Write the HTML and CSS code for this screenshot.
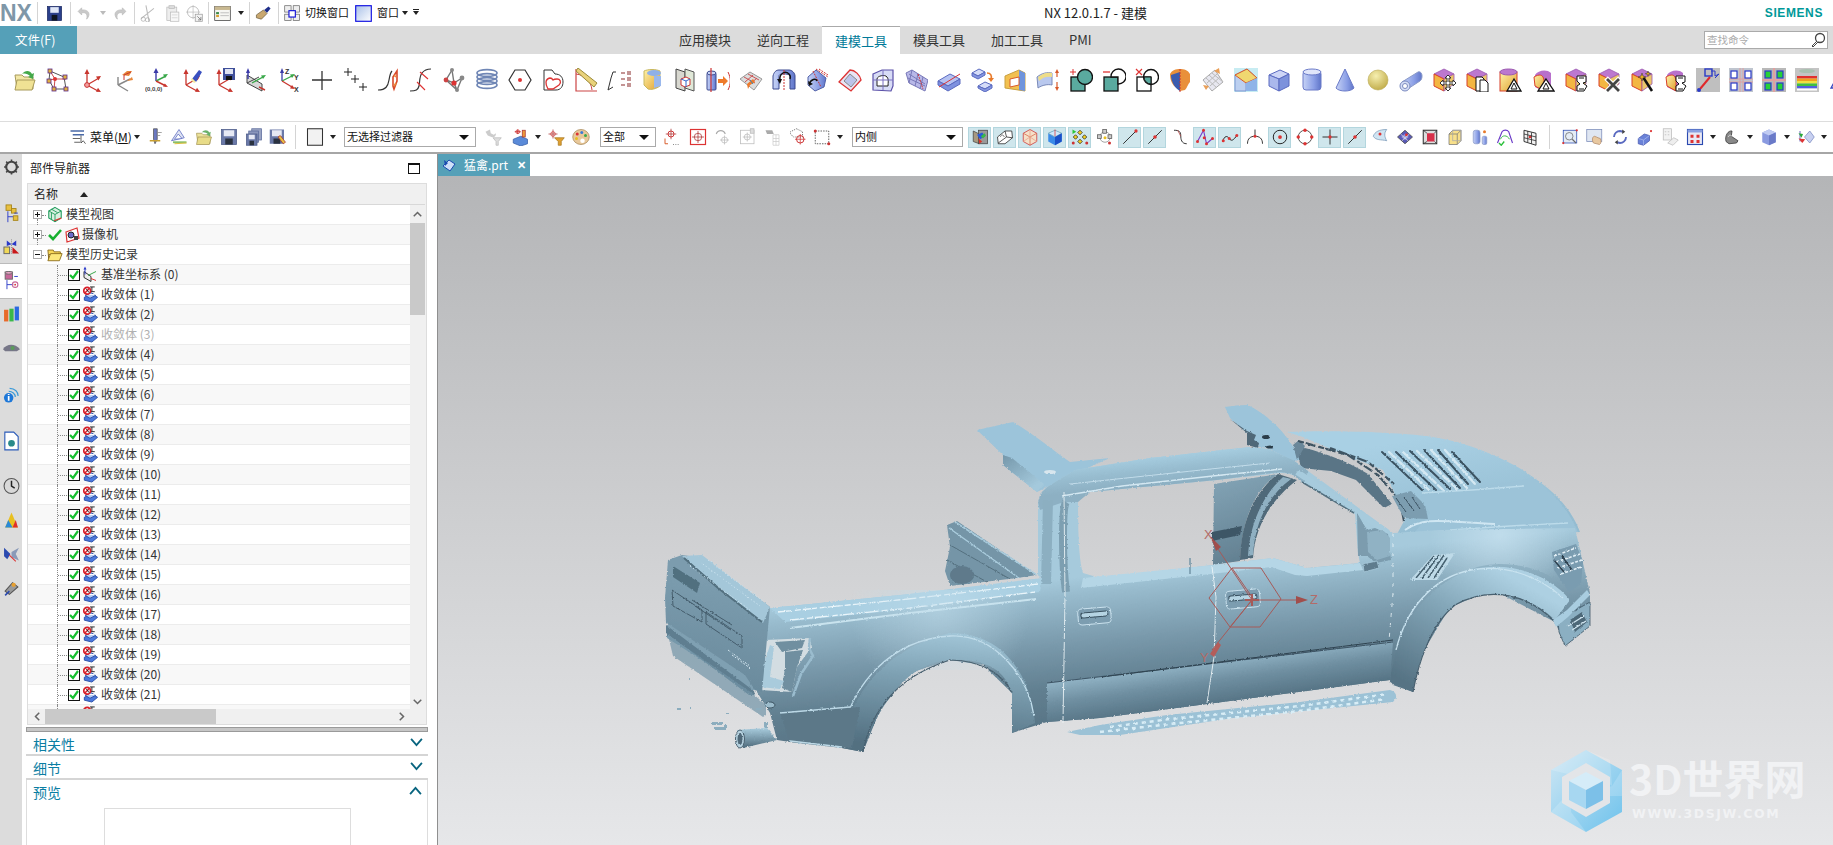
FILE: index.html
```html
<!DOCTYPE html>
<html lang="zh-CN">
<head>
<meta charset="utf-8">
<title>NX 12.0.1.7 - 建模</title>
<link rel="stylesheet" href="styles.css">
</head>
<body>
<svg class="defs" width="0" height="0" aria-hidden="true">
<defs>
<linearGradient id="gy" x1="0" y1="0" x2="1" y2="1"><stop offset="0" stop-color="#fff3a8"/><stop offset="1" stop-color="#e0a030"/></linearGradient>
<linearGradient id="gb" x1="0" y1="0" x2="1" y2="0"><stop offset="0" stop-color="#c6d2f5"/><stop offset=".6" stop-color="#8b9fe6"/><stop offset="1" stop-color="#5f75c8"/></linearGradient>
<linearGradient id="gs" x1="0" y1="0" x2="1" y2="1"><stop offset="0" stop-color="#d5d8f8"/><stop offset="1" stop-color="#7f8fdc"/></linearGradient>
<radialGradient id="gball" cx=".4" cy=".3" r=".8"><stop offset="0" stop-color="#f6efb0"/><stop offset="1" stop-color="#bca640"/></radialGradient>
<linearGradient id="qw" x1="0" y1="0" x2="1" y2="1"><stop offset="0" stop-color="#a8c0e8"/><stop offset="1" stop-color="#fff"/></linearGradient>

<symbol id="r1" viewBox="0 0 24 24"><path d="M2 7h7l2 2h9v12H4z" fill="#f2e7a6" stroke="#a89a5a"/><path d="M2 22l2-10h18l-3 10z" fill="#f0e294" stroke="#a89a5a"/><path d="M9 6c3-4 8-4 10 0l2-1-1 6-5-2 2-1c-2-2-5-3-8-2z" fill="#45a84a"/></symbol>
<symbol id="r2" viewBox="0 0 24 24"><path d="M4 3l14 6 2 12H8L3 12z" fill="none" stroke="#555"/><path d="M4 3l5 8 11 0M9 11l-1 10M3 12l6-1" fill="none" stroke="#c94a4a"/><g fill="#e0b040" stroke="#5a2a8a" stroke-width=".8"><rect x="2" y="1" width="4" height="4"/><rect x="17" y="7" width="4" height="4"/><rect x="1" y="11" width="4" height="4"/><rect x="6" y="19" width="4" height="4"/><rect x="18" y="19" width="4" height="4"/></g><circle cx="9" cy="11" r="2" fill="#d33"/></symbol>
<g id="ax"><path d="M8 17V5M8 17l12-7M8 17l11 6" fill="none" stroke="#c8362e" stroke-width="1.3"/><path d="M8 1l-2.5 5h5zM22 8l-5 .5 2.5 4zM22 24l-5-.2 2-4z" fill="#c8362e"/></g>
<symbol id="r3" viewBox="0 0 24 24"><use href="#ax"/><circle cx="8" cy="17" r="2.4" fill="#f2a0a0" stroke="#c33"/></symbol>
<symbol id="r4" viewBox="0 0 24 24"><path d="M6 17V9M6 17l12-6M6 17l10 6" fill="none" stroke="#888" stroke-width="1.4"/><path d="M10 7l5-4h5l-3 5zM15 13l5-4 1 3z" fill="#e8873a"/><path d="M12 12V7l7-3" fill="none" stroke="#c8362e"/></symbol>
<symbol id="r5" viewBox="0 0 24 24"><path d="M11 13V4" stroke="#3a3aa8" stroke-width="1.4"/><path d="M11 0l-2.5 5h5z" fill="#3a3aa8"/><path d="M11 13l10-5" stroke="#3aa84a" stroke-width="1.4"/><path d="M23 6l-5 .5 2 3.5z" fill="#3aa84a"/><path d="M11 13l10 5" stroke="#c8362e" stroke-width="1.4"/><path d="M23 19l-5-.4 1.8-3z" fill="#c8362e"/><text x="0" y="23" font-size="6" font-weight="700" fill="#444" font-family="Liberation Sans">(0,0,0)</text></symbol>
<symbol id="r6" viewBox="0 0 24 24"><use href="#ax"/><path d="M14 11l7-9 3 2-6 10z" fill="#3a50c0"/><path d="M14 10l4 4-2 1-3-3z" fill="#f4e9a0"/></symbol>
<symbol id="r7" viewBox="0 0 24 24"><use href="#ax"/><rect x="12" y="0" width="12" height="12" fill="#3f4f9a"/><rect x="14" y="1" width="8" height="5" fill="#dfe3f2"/><rect x="15" y="8" width="6" height="4" fill="#111"/></symbol>
<symbol id="r8" viewBox="0 0 24 24"><path d="M3 7l15 9v7L3 15z" fill="#d8d8d8" stroke="#444"/><path d="M3 15l12-6" stroke="#444"/><path d="M4 11V3" stroke="#3a3aa8" stroke-width="1.4"/><path d="M4 0L2 5h4z" fill="#3a3aa8"/><path d="M8 15l11-6" stroke="#3aa84a" stroke-width="1.4"/><path d="M22 7l-5 .5 2 3.5z" fill="#3aa84a"/><path d="M15 19l6 3" stroke="#c8362e" stroke-width="1.4"/></symbol>
<symbol id="r9" viewBox="0 0 24 24"><path d="M5 13V4" stroke="#3a3aa8" stroke-width="1.3"/><path d="M5 0L3 5h4z" fill="#3a3aa8"/><path d="M5 13l10-5" stroke="#3aa84a" stroke-width="1.3"/><path d="M18 6l-5 .5 2 3.5z" fill="#3aa84a"/><path d="M5 13l10 6" stroke="#c8362e" stroke-width="1.3"/><path d="M18 21l-5-.5 2-3.5z" fill="#c8362e"/><g font-size="7" font-weight="700" fill="#333" font-family="Liberation Sans"><text x="8" y="6">Z</text><text x="17" y="12">Y</text><text x="17" y="24">X</text></g></symbol>
<symbol id="r10" viewBox="0 0 24 24"><path d="M12 3v19M2 12h20" stroke="#333" stroke-width="1.3"/></symbol>
<symbol id="r11" viewBox="0 0 24 24"><path d="M5 0v8M1 4h8M12 7v8M8 11h8M20 15v8M16 19h8" stroke="#222"/></symbol>
<symbol id="r12" viewBox="0 0 24 24"><path d="M2 22c8 0 10-4 11-10s2-8 3-9" fill="none" stroke="#333" stroke-width="1.2"/><path d="M17 9l4-6v10l-3 8-1-3z" fill="none" stroke="#d94a2a" stroke-width="1.6"/><path d="M18 7l2 2M18 18l2-3" stroke="#e88a3a" stroke-width="1.6"/></symbol>
<symbol id="r13" viewBox="0 0 24 24"><path d="M1 23c6 0 8-1 9-5s0-9 3-13 6-4 9-4" fill="none" stroke="#333" stroke-width="1.2"/><path d="M8 14l8 8M11 4l8 7" stroke="#d33" stroke-width="1.1"/></symbol>
<symbol id="r14" viewBox="0 0 24 24"><path d="M10 2L4 12l8 3 8-5M10 2l2 13 3 7M4 12l11 10 5-12" fill="none" stroke="#777" stroke-width="1.4"/><circle cx="10" cy="2" r="2" fill="#888"/><circle cx="4" cy="12" r="2.4" fill="#c44"/><circle cx="20" cy="10" r="2.4" fill="#888"/><circle cx="12" cy="15" r="2.6" fill="#d33"/><circle cx="15" cy="22" r="2" fill="#888"/></symbol>
<symbol id="r15" viewBox="0 0 24 24"><g fill="none" stroke="#6f86b5" stroke-width="1.6"><ellipse cx="12" cy="5" rx="10" ry="3.4"/><ellipse cx="12" cy="9" rx="10" ry="3.4"/><ellipse cx="12" cy="13" rx="10" ry="3.4"/><ellipse cx="12" cy="17" rx="10" ry="3.4"/></g></symbol>
<symbol id="r16" viewBox="0 0 24 24"><path d="M7 2h10l6 10-6 10H7L1 12z" fill="#fff" stroke="#333" stroke-width="1.2"/><circle cx="12" cy="12" r="2" fill="#d33"/></symbol>
<symbol id="r17" viewBox="0 0 24 24"><path d="M3 2h8l3 4c5 0 8 3 8 8 0 4-2 8-7 8H3z" fill="#fff" stroke="#333"/><path d="M7 21c-3-5-3-10 2-11 2 0 3 2 3 2s1-1 4-1 5 3 2 6l-6 4z" fill="none" stroke="#d33" stroke-width="1.3"/></symbol>
<symbol id="r18" viewBox="0 0 24 24"><path d="M2 1v22h21" fill="none" stroke="#c44" stroke-width="1.2"/><path d="M2 6c9 1 15 7 16 16" fill="none" stroke="#c44"/><path d="M4 0l19 15-3 4L2 3z" fill="#e9d27a" stroke="#9a8a3a"/></symbol>
<symbol id="r19" viewBox="0 0 24 24"><path d="M1 22l3-12M1 22l5-3" fill="none" stroke="#333"/><path d="M4 10l2-6h3" fill="none" stroke="#333"/><g fill="none" stroke="#8a2a2a" stroke-width="1.1"><path d="M14 5h4M20 4h4M20 6h4M14 11h4M20 10h4M20 12h4M14 17h4M20 16h4M20 18h4"/></g></symbol>
<symbol id="r20" viewBox="0 0 24 24"><path d="M4 3c4-2 12-2 16 0v15c-4 3-9 4-12 3l-4-4z" fill="url(#gy)" stroke="#c8b860"/><ellipse cx="14" cy="5" rx="7" ry="3" fill="#8fb0e8"/><path d="M14 8h7v10l-7 2z" fill="#9ab8ec"/></symbol>
<symbol id="r21" viewBox="0 0 24 24"><path d="M3 1l9 3v19l-9-3z" fill="#d8d8d0" stroke="#444"/><path d="M12 1l9 3v19l-9-3z" fill="#e0e8d8" stroke="#555"/><path d="M8 11l5-2 4 2v6l-5 2-4-2z" fill="#fff" stroke="#c33"/><path d="M8 11l5 2 4-2M13 13v6" stroke="#36c" fill="none"/></symbol>
<symbol id="r22" viewBox="0 0 24 24"><rect x="1" y="5" width="9" height="17" rx="1" fill="url(#gb)" stroke="#3c4a90"/><ellipse cx="5.500" cy="5" rx="4.500" ry="2" fill="#c6d2f5" stroke="#3c4a90"/><path d="M5 0v24" stroke="#c33" stroke-width="1.2"/><path d="M12 11h5V8l5 5-5 5v-3h-5z" fill="#ee7a2a"/><path d="M22 4c3 6 3 12 0 18" fill="none" stroke="#c33"/></symbol>
<symbol id="r23" viewBox="0 0 24 24"><path d="M1 11l10-7 12 7-8 11z" fill="#ddd" stroke="#999"/><path d="M5 9l11 6M9 6l11 6M6 14l8-7M10 17l8-7" stroke="#c55" fill="none"/><path d="M8 16l6-5 2 3-5 3-2 4z" fill="#ee7a2a"/><path d="M11 12l3 4" stroke="#38b"/></symbol>
<symbol id="r24" viewBox="0 0 24 24"><path d="M1 21V8c1-4 3-6 6-6h10c3 0 6 3 6 6v13h-5V9c0-2-1-3-6-3S7 7 7 9v12z" fill="url(#gb)" stroke="#3c4a90"/><path d="M8 12c-1-6 5-10 9-6 2 2 1 5 1 5" fill="none" stroke="#111" stroke-width="1.5"/><path d="M5 11l5 0-2 5z" fill="#111"/><path d="M12 2v21" stroke="#c33" stroke-dasharray="2 1"/></symbol>
<symbol id="r25" viewBox="0 0 24 24"><path d="M3 9l8-7 10 8-2 9-9 4-7-6z" fill="url(#gb)" stroke="#5060a8"/><path d="M11 1l12 8M14 1l9 6M8 3l8 16" stroke="#c33" fill="none" stroke-dasharray="2 1"/><path d="M4 16c2-5 7-6 8-3" stroke="#111" stroke-width="1.5" fill="none"/><path d="M3 13l1 5 4-2z" fill="#111"/></symbol>
<symbol id="r26" viewBox="0 0 24 24"><path d="M1 14L12 2c5 0 10 5 11 10L13 23z" fill="#e8e4f4" stroke="#d33" stroke-width="1.3"/><path d="M6 13l6-7 7 6-6 7z" fill="#bcc4ea" stroke="#888"/></symbol>
<symbol id="r27" viewBox="0 0 24 24"><path d="M2 6l9-4h11v16l-2 5-18-1z" fill="#d8dcf6" stroke="#5a50a8" stroke-width="1.2"/><path d="M6 18v-7c0-3 8-5 10-2 2 2 1 6 1 9z" fill="#fff" stroke="#222"/><path d="M12 2v20M2 12h20" stroke="#7a70c0" fill="none"/></symbol>
<symbol id="r28" viewBox="0 0 24 24"><path d="M2 5l6-3 16 10-3 11-16-8z" fill="#b8b8e8" stroke="#7878b8"/><path d="M4 10l17 8M5 6l16 10M8 2l-3 13M14 6l-3 12M19 9l-3 12" stroke="#7878b8" fill="none"/><path d="M14 6l5 15" stroke="#c33" stroke-dasharray="2 1"/></symbol>
<symbol id="r29" viewBox="0 0 24 24"><path d="M1 13l12-7 10 5-12 7z" fill="#b5c2f2" stroke="#5a6ac0"/><path d="M1 13v4l10 6 12-7v-5l-12 7z" fill="#7e91df" stroke="#5a6ac0"/><path d="M2 19L23 6" stroke="#d33"/></symbol>
<symbol id="r30" viewBox="0 0 24 24"><path d="M2 5l7-4 6 3-7 4z" fill="#d5dcf8" stroke="#5a6ac0"/><path d="M2 5v3l6 3 7-4V4l-7 4z" fill="#8596e0" stroke="#5a6ac0"/><path d="M8 18l7-4 7 3-7 4z" fill="#d5dcf8" stroke="#5a6ac0"/><path d="M8 18v2l7 4 7-4v-3l-7 4z" fill="#8596e0" stroke="#5a6ac0"/><path d="M17 5c4 0 5 3 4 6" stroke="#e87a2a" fill="none" stroke-width="1.6"/><path d="M18 10h6l-3 4z" fill="#e87a2a"/></symbol>
<symbol id="r31" viewBox="0 0 24 24"><path d="M2 8l14-6 6 3v18l-20-3z" fill="#f2c050" stroke="#c8a040"/><path d="M16 2l6 3v18l-6-1z" fill="#6f94dc"/><path d="M7 11l9-2v8l-9 2z" fill="#fff" stroke="#d85a2a"/></symbol>
<symbol id="r32" viewBox="0 0 24 24"><path d="M1 9c5-4 10-5 15-4v12c-4-1-10 0-14 3z" fill="#b9c8ee" stroke="#7a8ab8"/><path d="M2 9c5-4 9-5 14-4v4c-5-1-9 0-13 4z" fill="#eedd88"/><path d="M21 4v5M21 14v6" stroke="#d85a2a" stroke-width="1.2"/><path d="M21 1l-2 4h4zM21 23l-2-4h4z" fill="#d85a2a"/></symbol>
<symbol id="r33" viewBox="0 0 24 24"><rect x="2" y="9" width="14" height="14" fill="#5aaa9f" stroke="#111" stroke-width="1.3"/><circle cx="16" cy="9" r="7.500" fill="#5aaa9f" stroke="#111" stroke-width="1.300"/><path d="M4 1v6M1 4h6" stroke="#d33"/></symbol>
<symbol id="r34" viewBox="0 0 24 24"><rect x="2" y="9" width="14" height="14" fill="#5aaa9f" stroke="#111" stroke-width="1.3"/><path d="M16 16A7.500 7.500 0 1 0 9 9h7z" fill="#fff" stroke="#111" stroke-width="1.3"/><path d="M1 4h7" stroke="#d33" stroke-width="1.3"/></symbol>
<symbol id="r35" viewBox="0 0 24 24"><rect x="2" y="9" width="14" height="14" fill="#fff" stroke="#111" stroke-width="1.3"/><circle cx="16" cy="9" r="7.500" fill="none" stroke="#111" stroke-width="1.300"/><path d="M9 9h7v7a7 7 0 0 1-7-7z" fill="#5aaa9f" stroke="#111"/><path d="M1 1l6 6M7 1L1 7" stroke="#d33" stroke-width="1.200"/></symbol>
<symbol id="r36" viewBox="0 0 24 24"><path d="M2 6c2-4 6-5 10-5s8 1 10 5v8c-2 2-3 6-5 8l-5 1-2-3-4-2c-2-3-4-6-4-12z" fill="#e9903a"/><path d="M3 7l9-3v19c-4-2-9-8-9-16z" fill="#3a5cb0"/><path d="M12 1v23" stroke="#c33" stroke-dasharray="2 1"/></symbol>
<symbol id="r37" viewBox="0 0 24 24"><path d="M2 12L14 2l8 12-11 9z" fill="#e7e7f0" stroke="#aaa"/><path d="M5 10l11 10M8 7l11 10M11 5l11 9M6 15l10-9M9 18l10-9" stroke="#bbb" fill="none"/><path d="M13 3l5-3 1 6zM5 22l-3-5 6 1z" fill="#e9a05a"/></symbol>
<symbol id="r38" viewBox="0 0 24 24"><rect width="24" height="24" fill="#c7ecf2"/><path d="M1 7l12-6 10 9-11 13H1z" fill="#bcd0f0" stroke="#7f96d0"/><path d="M1 7l12-6 10 9-11 5z" fill="#f0d770" stroke="#d85a2a"/><path d="M12 15v8" stroke="#7f96d0"/><path d="M12 15l11-5v13H12z" fill="#8fb4e8"/></symbol>
<symbol id="r39" viewBox="0 0 24 24"><path d="M2 7l11-5 9 4-10 5z" fill="#cdd5f6" stroke="#5a6ac0"/><path d="M2 7l10 4v12L2 18z" fill="#aab8ec" stroke="#5a6ac0"/><path d="M12 11l10-5v12l-10 5z" fill="#7d92dc" stroke="#5a6ac0"/></symbol>
<symbol id="r40" viewBox="0 0 24 24"><rect x="3" y="3" width="18" height="19" rx="3" fill="url(#gb)" stroke="#6a7ac8"/><ellipse cx="12" cy="4" rx="9" ry="3" fill="#dfe5fa" stroke="#6a7ac8"/></symbol>
<symbol id="r41" viewBox="0 0 24 24"><path d="M12 1L3 20c3 4 15 4 18 0z" fill="url(#gb)" stroke="#6a7ac8"/></symbol>
<symbol id="r42" viewBox="0 0 24 24"><circle cx="12" cy="12" r="10" fill="url(#gball)" stroke="#b8a850" stroke-width=".6"/></symbol>
<symbol id="r43" viewBox="0 0 24 24"><path d="M3 14L19 4c2-1 4 1 4 4s-1 4-2 5L7 22z" fill="url(#gb)" stroke="#8a9ac8"/><ellipse cx="6" cy="18" rx="5" ry="5" fill="#d5ddf5" stroke="#7a8ac0"/><ellipse cx="6" cy="18" rx="2.500" ry="2.500" fill="#fff" stroke="#7a8ac0"/></symbol>
<g id="sy"><path d="M12 1l10 5-10 5-10-5z" fill="#bc78cf" stroke="#9a58b0" stroke-width=".8"/><path d="M2 6l10 5v12L2 18z" fill="#f3b642" stroke="#d8402a"/><path d="M12 11l10-5v10l-10 7z" fill="#ecc66a" stroke="#9a58b0" stroke-width=".8"/></g>
<g id="syr"><path d="M4 7c3-5 12-6 16-2v14l-8 4-8-4z" fill="#b870cc"/><path d="M3 9c5-3 9-3 10 3v11l-9-5z" fill="url(#gy)" stroke="#d8402a"/></g>
<symbol id="r44" viewBox="0 0 24 24"><use href="#sy"/><path d="M16 7l-3 3h2v4h-4v-2l-3 3 3 3v-2h4v4h-2l3 3 3-3h-2v-4h4v2l3-3-3-3v2h-4v-4h2z" fill="#fff" stroke="#333"/></symbol>
<symbol id="r45" viewBox="0 0 24 24"><use href="#sy"/><path d="M11 9h6l2 2v12h-8z" fill="#fff" stroke="#111"/><path d="M15 12h5l3 3v9h-8z" fill="#fff" stroke="#111"/></symbol>
<symbol id="r46" viewBox="0 0 24 24"><rect x="2" y="4" width="17" height="19" fill="url(#gy)" stroke="#d8402a"/><ellipse cx="10.500" cy="4" rx="8.500" ry="3" fill="#bc78cf" stroke="#9a58b0"/><path d="M16 11l7 12H9z" fill="#fff" stroke="#111" stroke-width="1.300"/><path d="M16 15l3 6h-6z" fill="none" stroke="#111"/></symbol>
<symbol id="r47" viewBox="0 0 24 24"><use href="#syr"/><path d="M15 11l8 12H7z" fill="#fff" stroke="#111" stroke-width="1.300"/><path d="M15 15l3 6h-6z" fill="none" stroke="#111"/></symbol>
<symbol id="r48" viewBox="0 0 24 24"><use href="#sy"/><path d="M13 8h9v6l-3 1 4 3-3 5h-7v-5l3-2-3-3z" fill="#fff" stroke="#111"/><path d="M15 10h5M15 21h5" stroke="#111"/></symbol>
<symbol id="r49" viewBox="0 0 24 24"><use href="#sy"/><path d="M9 10l14 14M23 10L9 24" stroke="#fff" stroke-width="5"/><path d="M10 11l12 12M22 11L10 23" stroke="#444" stroke-width="2.800"/></symbol>
<symbol id="r50" viewBox="0 0 24 24"><use href="#sy"/><path d="M13 9l9 14" stroke="#111" stroke-width="2.500"/><path d="M12 5l1 3 3 1-3 1-1 3-1-3-3-1 3-1zM18 3l.7 2 2 .7-2 .7-.7 2-.7-2-2-.7 2-.7z" fill="#e8b020" stroke="#333" stroke-width=".5"/></symbol>
<symbol id="r51" viewBox="0 0 24 24"><use href="#syr"/><path d="M13 8h9v6l-3 1 4 3-3 5h-7v-5l3-2-3-3z" fill="#fff" stroke="#111"/><path d="M15 10h5M15 21h5" stroke="#111"/></symbol>
<symbol id="r52" viewBox="0 0 24 24"><rect width="24" height="24" fill="#bfbfbf"/><rect x="9" y="1" width="7" height="7" fill="none" stroke="#2a3ac8" stroke-width="1.400"/><path d="M15 3h4v5l4-2-4 4" fill="none" stroke="#2a3ac8"/><path d="M4 21L14 9" stroke="#e0282a" stroke-width="2"/><circle cx="3" cy="22" r="2" fill="#2a3ac8"/></symbol>
<symbol id="r53" viewBox="0 0 24 24"><rect width="24" height="24" fill="#bfc5cf"/><path d="M0 11h24M0 14h24M11 0v24M14 0v24" stroke="#e0a0a0"/><g fill="#fff" stroke="#2a3ac8" stroke-width="1.200"><rect x="2" y="3" width="6" height="7"/><rect x="16" y="3" width="6" height="7"/><rect x="2" y="15" width="6" height="7"/><rect x="16" y="15" width="6" height="7"/></g></symbol>
<symbol id="r54" viewBox="0 0 24 24"><rect width="24" height="24" fill="#b8b8b8"/><path d="M0 12h24M12 0v24" stroke="#e0a0a0" stroke-width="2"/><g fill="#27d037" stroke="#2a3ac8" stroke-width="1.200"><rect x="3" y="3" width="6" height="7"/><rect x="15" y="3" width="6" height="7"/><rect x="3" y="15" width="6" height="7"/><rect x="15" y="15" width="6" height="7"/></g></symbol>
<symbol id="r55" viewBox="0 0 24 24"><rect width="24" height="24" fill="#c4c4c4"/><ellipse cx="12" cy="3" rx="8" ry="2" fill="#a8c0b0"/><rect x="2" y="8" width="20" height="2.500" fill="#e03030"/><rect x="2" y="10.500" width="20" height="2.500" fill="#f0a020"/><rect x="2" y="13" width="20" height="2.500" fill="#f0e040"/><rect x="2" y="15.500" width="20" height="2.500" fill="#40c040"/><rect x="2" y="18" width="20" height="2.500" fill="#5060e0"/><rect x="2" y="20.500" width="20" height="2" fill="#fff"/></symbol>
<symbol id="r56" viewBox="0 0 24 24"><path d="M12 4L3 20h18z" fill="#dfe3fa" stroke="#3a4ac0" stroke-width="1.300"/></symbol>

<symbol id="b-menu" viewBox="0 0 24 24"><path d="M2 4h18M5 9h15" stroke="#4a6aa8" stroke-width="2"/><path d="M5 14h10M7 19h8" stroke="#666" stroke-width="1.500"/><path d="M16 10v10l3-3 3 4" fill="none" stroke="#333"/></symbol>
<symbol id="b1" viewBox="0 0 24 24"><path d="M10 1h5v14l-3 6-2-6z" fill="#6a78c0" stroke="#555"/><path d="M15 6h6M15 10h4" stroke="#888"/><path d="M5 17h14" stroke="#c9a030" stroke-width="2"/></symbol>
<symbol id="b2" viewBox="0 0 24 24"><path d="M2 17L12 2l7 11z" fill="#dfe3f2" stroke="#5a6ac0"/><path d="M6 15l5-7 5 6z" fill="#fff" stroke="#5a6ac0"/><path d="M4 19l18 0" stroke="#8abf6a" stroke-width="2.500"/><path d="M6 21l16-1" stroke="#e0c040" stroke-width="1.500"/></symbol>
<symbol id="b-open" viewBox="0 0 24 24"><path d="M2 7h7l2 2h9v12H4z" fill="#ece29a" stroke="#a89a5a"/><path d="M2 22l2-10h18l-3 10z" fill="#e8dc88" stroke="#a89a5a"/><path d="M9 6c3-4 8-4 10 0l2-1-1 6-5-2 2-1c-2-2-5-3-8-2z" fill="#6ab06a"/></symbol>
<symbol id="b-save" viewBox="0 0 24 24"><rect x="2" y="2" width="20" height="20" fill="#6a79a8" stroke="#4a5a88"/><rect x="5" y="3" width="14" height="8" fill="#e6e9f4"/><rect x="7" y="14" width="10" height="8" fill="#2a3240"/></symbol>
<symbol id="b-saveall" viewBox="0 0 24 24"><rect x="9" y="1" width="13" height="15" fill="#9aa4c4" stroke="#5a6a9a"/><rect x="5" y="4" width="13" height="15" fill="#8a96bc" stroke="#5a6a9a"/><rect x="2" y="8" width="14" height="15" fill="#6a79a8" stroke="#4a5a88"/><rect x="5" y="9" width="8" height="6" fill="#e6e9f4"/><rect x="6" y="17" width="6" height="6" fill="#2a3240"/></symbol>
<symbol id="b-saveas" viewBox="0 0 24 24"><rect x="1" y="2" width="19" height="19" fill="#6a79a8"/><rect x="4" y="3" width="13" height="8" fill="#e6e9f4"/><rect x="6" y="14" width="9" height="7" fill="#2a3240"/><path d="M12 12l7 9 3-2-7-9z" fill="#e8c040" stroke="#a33"/></symbol>
<symbol id="b-swatch" viewBox="0 0 24 24"><rect x="2" y="1" width="20" height="22" fill="#f2f2f2" stroke="#333" stroke-width="1.400"/></symbol>
<symbol id="b-wrench" viewBox="0 0 24 24"><path d="M2 5l6-3 1 5 4 2 3-2c0 5-3 6-6 5L5 10z" fill="#ccc"/><path d="M12 13h11l-4 5v5h-3v-5z" fill="#ddd" stroke="#bbb"/></symbol>
<symbol id="b-filter" viewBox="0 0 24 24"><path d="M3 15l10-4 9 4v6l-9 3-10-4z" fill="#5a8ad8" stroke="#3a60a8"/><path d="M9 8V2M5 5h8" stroke="#c33" stroke-width="1.300"/><circle cx="9" cy="5" r="2.500" fill="none" stroke="#c33"/><rect x="15" y="3" width="4" height="9" fill="#ec9a3a" stroke="#a33"/></symbol>
<symbol id="b-tfilter" viewBox="0 0 24 24"><path d="M8 2v12M2 8h12" stroke="#a33"/><circle cx="8" cy="8" r="3" fill="none" stroke="#c33"/><path d="M10 13h13l-4 5v5h-4v-5z" fill="#e0a030" stroke="#a87a20"/></symbol>
<symbol id="b-pal" viewBox="0 0 24 24"><ellipse cx="12" cy="12" rx="11" ry="10" fill="#e8c89a" stroke="#a88a5a"/><circle cx="7" cy="8" r="2" fill="#d33"/><circle cx="13" cy="6" r="2" fill="#3a7ad8"/><circle cx="18" cy="10" r="2" fill="#3aa84a"/><circle cx="6" cy="14" r="2" fill="#e8c020"/><circle cx="14" cy="17" r="3" fill="#fff"/></symbol>
<symbol id="b-snap1" viewBox="0 0 24 24"><path d="M12 1v14M5 8h14" stroke="#a33"/><circle cx="12" cy="8" r="4" fill="none" stroke="#c33" stroke-width="1.300"/><path d="M4 14v7h4" fill="none" stroke="#d85a2a" stroke-width="1.300"/><path d="M15 22h1M18 22h1M21 22h1" stroke="#333"/></symbol>
<symbol id="b-snap2" viewBox="0 0 24 24"><rect x="2" y="2" width="20" height="20" fill="#fff" stroke="#d33" stroke-width="1.600"/><circle cx="12" cy="12" r="5" fill="none" stroke="#a33"/><path d="M12 4v16M4 12h16" stroke="#a33"/></symbol>
<symbol id="b-g1" viewBox="0 0 24 24"><path d="M3 8c2-6 10-6 12 0" fill="none" stroke="#aaa" stroke-width="1.500"/><path d="M14 10v12M8 16h12" stroke="#bbb"/><circle cx="14" cy="16" r="4" fill="none" stroke="#bbb"/></symbol>
<symbol id="b-g2" viewBox="0 0 24 24"><rect x="2" y="3" width="18" height="18" fill="#fff" stroke="#bbb"/><path d="M11 6v12M5 12h12" stroke="#bbb"/><circle cx="11" cy="12" r="4" fill="none" stroke="#bbb"/><rect x="15" y="1" width="5" height="6" fill="#ddd" stroke="#bbb"/></symbol>
<symbol id="b-g3" viewBox="0 0 24 24"><path d="M2 3h9l2 5H4z" fill="#aaa"/><path d="M12 9h8v14h-8zM12 14h8M12 18h8M16 9v14" fill="none" stroke="#ccc"/></symbol>
<symbol id="b-snap3" viewBox="0 0 24 24"><path d="M10 1l8 4v7H6L2 8V5z" fill="none" stroke="#444" stroke-dasharray="1.500 1.500"/><circle cx="15" cy="15" r="5" fill="none" stroke="#c33" stroke-width="1.300"/><path d="M15 8v14M8 15h14" stroke="#c33"/></symbol>
<symbol id="b-snap4" viewBox="0 0 24 24"><rect x="3" y="4" width="18" height="17" fill="none" stroke="#333" stroke-dasharray="2 1.500"/><circle cx="3" cy="4" r="2" fill="#c33"/><circle cx="21" cy="21" r="2" fill="#c33"/></symbol>
<symbol id="t1" viewBox="0 0 24 24"><path d="M3 4l8 4v13l-8-3z" fill="#a89a80" stroke="#444"/><rect x="10" y="3" width="12" height="18" fill="#9a9a9a" stroke="#444"/><path d="M8 9l7-3 4 5-7 4z" fill="#2a5ad8"/><path d="M13 11l5-4 2 3-4 4z" fill="#3ab84a"/><path d="M10 14l5 4-4 3z" fill="#d8362a"/></symbol>
<symbol id="t2" viewBox="0 0 24 24"><path d="M2 12l10-8h9l1 9-10 8H3z" fill="#fff" stroke="#222"/><path d="M12 4l2 8 8 1M14 12L3 20" fill="none" stroke="#222"/><path d="M6 12c0-3 4-4 5 0" fill="none" stroke="#555"/></symbol>
<symbol id="t3" viewBox="0 0 24 24"><path d="M3 7l9-5 9 5v11l-9 5-9-5z" fill="#f5e0c8" stroke="#c33"/><path d="M3 7l9 5 9-5M12 12v11" fill="none" stroke="#d86a4a"/><path d="M12 2v10M3 18l9-6 9 6" fill="none" stroke="#e8a08a"/></symbol>
<symbol id="t4" viewBox="0 0 24 24"><path d="M3 7l9-4 9 4v11l-9 5-9-5z" fill="#3a8ae8"/><path d="M3 7l9-4 9 4-9 5z" fill="#cfe8fa" stroke="#7ab"/><path d="M12 12l9-5v11l-9 5z" fill="#1a50c8"/><path d="M12 2v9" stroke="#d33"/></symbol>
<symbol id="t5" viewBox="0 0 24 24"><g fill="#f5d020" stroke="#222"><path d="M12 3l3 3-3 3-3-3zM12 15l3 3-3 3-3-3zM6 9l3 3-3 3-3-3zM18 9l3 3-3 3-3-3z"/></g><path d="M2 2l5 3-5 3z" fill="#2ac83a"/><circle cx="21" cy="20" r="2" fill="#c33"/><circle cx="3" cy="20" r="2" fill="#c33"/></symbol>
<symbol id="t6" viewBox="0 0 24 24"><circle cx="12" cy="12" r="7" fill="none" stroke="#888"/><g fill="#ccc" stroke="#555"><rect x="9" y="2" width="5" height="5"/><rect x="2" y="9" width="5" height="5"/><rect x="16" y="9" width="5" height="5"/></g><circle cx="12" cy="13" r="2" fill="#e8c020"/><circle cx="18" cy="20" r="2" fill="#c33"/></symbol>
<symbol id="t7" viewBox="0 0 24 24"><path d="M3 21L20 4" stroke="#222" stroke-width="1.200"/><circle cx="20" cy="4" r="2.200" fill="#d33"/></symbol>
<symbol id="t8" viewBox="0 0 24 24"><path d="M3 21L21 3" stroke="#222" stroke-width="1.200"/><circle cx="12" cy="12" r="2.400" fill="#d33"/></symbol>
<symbol id="t9" viewBox="0 0 24 24"><path d="M4 3c7 0 9 2 9 7s1 11 8 11" fill="none" stroke="#333" stroke-width="1.300"/><path d="M9 3l4 8" stroke="#a33"/></symbol>
<symbol id="t10" viewBox="0 0 24 24"><path d="M2 18L10 3l4 18 8-7" fill="none" stroke="#7a3ac8" stroke-width="1.500"/><g fill="#d33"><circle cx="2" cy="18" r="2"/><circle cx="10" cy="3" r="2"/><circle cx="14" cy="21" r="2"/><circle cx="22" cy="14" r="2"/><circle cx="11" cy="13" r="2"/></g></symbol>
<symbol id="t11" viewBox="0 0 24 24"><path d="M2 18c3-8 6-8 9-4s5 3 11-5" fill="none" stroke="#222" stroke-width="1.300"/><g fill="#d33"><circle cx="3" cy="17" r="2"/><circle cx="11" cy="14" r="2"/><circle cx="21" cy="10" r="2"/></g></symbol>
<symbol id="t12" viewBox="0 0 24 24"><path d="M12 11V2M2 21c0-7 4-10 10-10s10 3 10 10" fill="none" stroke="#333" stroke-width="1.300"/><circle cx="12" cy="11" r="2" fill="#d33"/></symbol>
<symbol id="t13" viewBox="0 0 24 24"><circle cx="12" cy="12" r="9" fill="none" stroke="#222" stroke-width="1.300"/><circle cx="12" cy="12" r="2.500" fill="#d33"/></symbol>
<symbol id="t14" viewBox="0 0 24 24"><circle cx="12" cy="12" r="9" fill="none" stroke="#444" stroke-width="1.200"/><g fill="#d33"><circle cx="12" cy="3" r="2.300"/><circle cx="12" cy="21" r="2.300"/><circle cx="3" cy="12" r="2.300"/><circle cx="21" cy="12" r="2.300"/></g></symbol>
<symbol id="t15" viewBox="0 0 24 24"><path d="M12 2v20M2 12h20" stroke="#222" stroke-width="1.200"/><circle cx="12" cy="12" r="2.200" fill="#d33"/></symbol>
<symbol id="t16" viewBox="0 0 24 24"><path d="M3 11c2-6 8-9 18-9-4 5-3 10 0 15-8-2-14 0-18-6z" fill="#cfe4f2" stroke="#7a9ab8"/><circle cx="12" cy="8" r="2" fill="#d33"/></symbol>
<symbol id="t17" viewBox="0 0 24 24"><path d="M2 12l10-9 10 9-10 9z" fill="#5a5ab8" stroke="#444"/><path d="M7 12l5-4 5 4-5 4z" fill="#9a9ae0"/><circle cx="14" cy="9" r="2" fill="#d33"/><path d="M6 8l10 9M18 8L8 17" stroke="#ddd" fill="none"/></symbol>
<symbol id="t18" viewBox="0 0 24 24"><rect x="3" y="3" width="18" height="18" fill="#ddd" stroke="#333" stroke-width="1.400"/><rect x="8" y="7" width="10" height="11" fill="#d8304a"/><path d="M3 3l5 4M21 3l-3 4M3 21l5-3M21 21l-3-3" stroke="#333"/></symbol>
<symbol id="t19" viewBox="0 0 24 24"><path d="M4 8l5-5h11v14l-5 5H4z" fill="#f8e08a" stroke="#777"/><path d="M4 8h11v14M15 8l5-5" fill="none" stroke="#777"/><rect x="9" y="3" width="11" height="14" fill="none" stroke="#aaa"/></symbol>
<symbol id="t20" viewBox="0 0 24 24"><rect x="3" y="3" width="9" height="18" rx="3" fill="url(#gb)" stroke="#8a9ac8"/><rect x="15" y="11" width="6" height="11" rx="2" fill="url(#gb)" stroke="#8a9ac8"/><circle cx="18" cy="5" r="2" fill="#e87a2a"/></symbol>
<symbol id="t21" viewBox="0 0 24 24"><path d="M2 20l6-15c2-3 7-3 9 0l5 15" fill="#fff" stroke="#6a3ac8" stroke-width="1.500"/><path d="M6 15c2-6 9-6 12 0" fill="none" stroke="#3ab84a" stroke-width="1.300"/><path d="M4 20l3 3 4-5" fill="none" stroke="#2ac03a" stroke-width="1.800"/></symbol>
<symbol id="t22" viewBox="0 0 24 24"><path d="M4 3l16 4v16L4 18z" fill="#f2f2f2" stroke="#222" stroke-width="1.200"/><path d="M4 8l16 4M4 13l16 4M9 4v15M14 6v15" stroke="#222" fill="none"/><circle cx="12" cy="12" r="1.800" fill="#d33"/></symbol>
<symbol id="e1" viewBox="0 0 24 24"><rect x="3" y="3" width="18" height="17" fill="#e4ecf6" stroke="#2a4ab0"/><circle cx="11" cy="11" r="5" fill="none" stroke="#666"/><path d="M15 15l5 5" stroke="#666" stroke-width="1.500"/><circle cx="3" cy="20" r="1.500" fill="#d33"/><circle cx="21" cy="3" r="1.500" fill="#d33"/></symbol>
<symbol id="e2" viewBox="0 0 24 24"><rect x="1" y="2" width="20" height="16" fill="#dfe6f2" stroke="#7a8ab8"/><path d="M10 20c-2-3-2-8 1-9l3 1 2 1 3 1c2 3 1 7-1 8z" fill="#e8c8a0" stroke="#b08a6a"/></symbol>
<symbol id="e3" viewBox="0 0 24 24"><path d="M4 12c0-5 4-8 8-8l4 1" fill="none" stroke="#5a6ac0" stroke-width="2.500"/><path d="M20 12c0 5-4 8-8 8l-4-1" fill="none" stroke="#5a6ac0" stroke-width="2.500"/><path d="M15 2l4 3-4 3zM9 16l-4 3 4 3z" fill="#444"/></symbol>
<symbol id="e4" viewBox="0 0 24 24"><path d="M3 14l8-6 7 2v7l-8 6-7-2z" fill="#6a82d8" stroke="#4a5ab0"/><path d="M3 14l7 2 8-6M10 16v7" fill="none" stroke="#a8b8ee"/><circle cx="20" cy="4" r="1.500" fill="#d33"/></symbol>
<symbol id="e5" viewBox="0 0 24 24"><rect x="3" y="1" width="11" height="15" fill="#f2f2f2" stroke="#bbb"/><path d="M5 5h2M9 5h2M5 9h2M9 9h2" stroke="#bbb"/><path d="M9 20l8-7 6 3-7 7z" fill="#eee" stroke="#bbb"/></symbol>
<symbol id="e6" viewBox="0 0 24 24"><rect x="2" y="2" width="20" height="20" fill="#e8e8f4" stroke="#2a4ab0" stroke-width="1.500"/><rect x="2" y="2" width="20" height="4" fill="#8aa0e0"/><g fill="#d33"><rect x="6" y="9" width="4" height="4"/><rect x="14" y="9" width="4" height="4"/><rect x="6" y="16" width="4" height="4"/><rect x="14" y="16" width="4" height="4"/></g></symbol>
<symbol id="e7" viewBox="0 0 24 24"><path d="M4 18c-2-8 3-15 8-14l-1 7 9 6-2 3-10 1z" fill="#888" stroke="#333"/><path d="M7 12c1-3 3-3 5-1" fill="none" stroke="#eee"/></symbol>
<symbol id="e8" viewBox="0 0 24 24"><path d="M3 6l9-4 9 4v13l-9 4-9-4z" fill="#8a9ae0"/><path d="M3 6l9-4 9 4-9 4z" fill="#c0cbf2"/><path d="M12 10l9-4v13l-9 4z" fill="#6a7ac8"/></symbol>
<symbol id="e9" viewBox="0 0 24 24"><path d="M10 12l7-8 6 8-6 8z" fill="#c8d0f0" stroke="#7a8ac0"/><path d="M4 4v14" stroke="#3a3aa8"/><path d="M2 14l5 6 4-5z" fill="#d33"/><path d="M2 7l6 1-2 5z" fill="#2aa83a"/></symbol>

<symbol id="q-save" viewBox="0 0 24 24"><rect x="2" y="2" width="20" height="20" fill="#2a3f8a" stroke="#1a2860"/><rect x="6" y="3" width="12" height="8" fill="#dfe6f6"/><rect x="8" y="14" width="8" height="8" fill="#0c1420"/></symbol>
<symbol id="q-undo" viewBox="0 0 24 24"><path d="M8 4L3 9l5 5V11c6-1 9 2 7 9 6-6 4-14-7-13z" fill="#c9c9c9" stroke="#bbb"/></symbol>
<symbol id="q-redo" viewBox="0 0 24 24"><path d="M16 4l5 5-5 5V11c-6-1-9 2-7 9-6-6-4-14 7-13z" fill="#c9c9c9" stroke="#bbb"/></symbol>
<symbol id="q-cut" viewBox="0 0 24 24"><path d="M6 22l12-20M18 22L6 2" stroke="#bbb" stroke-width="1.500" transform="rotate(20 12 12)"/><circle cx="6" cy="20" r="3" fill="none" stroke="#aaa"/><circle cx="12" cy="21" r="3" fill="none" stroke="#aaa"/></symbol>
<symbol id="q-paste" viewBox="0 0 24 24"><rect x="4" y="3" width="14" height="19" fill="#eee" stroke="#bbb"/><rect x="7" y="1" width="8" height="4" fill="#ddd" stroke="#bbb"/><rect x="9" y="10" width="12" height="13" fill="#f8f8f8" stroke="#bbb"/><path d="M11 14h8M11 18h8" stroke="#ccc"/></symbol>
<symbol id="q-find" viewBox="0 0 24 24"><circle cx="10" cy="10" r="8" fill="none" stroke="#aaa"/><path d="M10 0v20M0 10h20" stroke="#bbb"/><rect x="13" y="13" width="10" height="10" fill="#f2f2f2" stroke="#999"/><path d="M16 16l5 5M21 17v4h-4" fill="none" stroke="#666"/></symbol>
<symbol id="q-win" viewBox="0 0 24 24"><rect x="1" y="2" width="22" height="20" fill="#f6f6f2" stroke="#333"/><rect x="1" y="2" width="22" height="5" fill="#c8b890"/><rect x="3" y="10" width="4" height="3" fill="#3a8a4a"/><rect x="3" y="14" width="4" height="3" fill="#d8a030"/><path d="M9 11h12M9 15h12" stroke="#aaa"/></symbol>
<symbol id="q-brush" viewBox="0 0 24 24"><path d="M2 14l10-7 5 5-8 8-7-2z" fill="#c9a870" stroke="#6a5a3a"/><path d="M13 7l6-5 3 3-5 6z" fill="#1e2e8a"/></symbol>
<symbol id="q-switch" viewBox="0 0 24 24"><g fill="#eee" stroke="#666"><rect x="1" y="1" width="9" height="9"/><rect x="13" y="1" width="9" height="9"/><rect x="1" y="13" width="9" height="9"/><rect x="13" y="13" width="9" height="9"/></g><rect x="7" y="8" width="9" height="9" fill="#fff" stroke="#1212d8" stroke-width="1.600"/></symbol>
<symbol id="q-window" viewBox="0 0 24 24"><rect x="1" y="1" width="22" height="22" fill="url(#qw)" stroke="#0a0ae0" stroke-width="1.600"/></symbol>

<symbol id="n-view" viewBox="0 0 18 18"><path d="M9 1l7 4v8l-7 4-7-4V5z" fill="#d8f0e0" stroke="#1e9a5a" stroke-width="1.200"/><path d="M2 5l7 4 7-4M9 9v8M5 3l7 4M5 7v7" fill="none" stroke="#1e9a5a"/><path d="M8 16l8-3" stroke="#d33" stroke-width="1.400"/></symbol>
<symbol id="n-tick" viewBox="0 0 14 12"><path d="M1 6l4 4 8-9" fill="none" stroke="#18b030" stroke-width="2.600"/></symbol>
<symbol id="n-cam" viewBox="0 0 16 16"><path d="M2 5l11-4 2 10-12 4z" fill="#fff" stroke="#d33" stroke-width="1.200"/><circle cx="7" cy="8" r="3" fill="#6a6ac8" stroke="#222"/><path d="M10 9h4v4h-4z" fill="#444"/></symbol>
<symbol id="n-folder" viewBox="0 0 18 18"><path d="M1 4h6l1 2h7v3H2v6z" fill="#f8d858" stroke="#8a6a1a"/><path d="M1 16l3-8h13l-3 8z" fill="#fce77a" stroke="#8a6a1a"/></symbol>
<symbol id="n-csys" viewBox="0 0 16 16"><path d="M2 5l7 5v5L2 11z" fill="#eee" stroke="#333"/><path d="M3 8V2" stroke="#2a3ac8"/><path d="M3 0L1.500 3h3z" fill="#2a3ac8"/><path d="M6 9l8-4" stroke="#3aa84a"/><path d="M9 12l5 2" stroke="#d33"/></symbol>
<symbol id="n-conv" viewBox="0 0 16 18"><path d="M8 1h5M10 1v5M8 6h5" stroke="#222" fill="none"/><path d="M2 12l8-4 6 4-6 5-8-2z" fill="#4a78dc" stroke="#2a50a8"/><path d="M3 10l6-3 5 3-6 3z" fill="#b8cef4" stroke="#2a50a8"/><path d="M7 9h6" stroke="#fff"/><circle cx="5" cy="5" r="3.600" fill="#fff" stroke="#d8202a" stroke-width="1.800"/><path d="M2.500 7.500l5-5" stroke="#d8202a" stroke-width="1.500"/><path d="M4 3l3 4" stroke="#222"/></symbol>
<symbol id="n-check" viewBox="0 0 12 12"><rect x=".5" y=".5" width="11" height="11" fill="#fff" stroke="#111"/><path d="M2 6l3 3 5-7" fill="none" stroke="#18c030" stroke-width="2.200"/></symbol>

<symbol id="s-gear" viewBox="0 0 16 16"><circle cx="8" cy="8" r="5" fill="none" stroke="#444" stroke-width="2"/><path d="M8 1v2M8 13v2M1 8h2M13 8h2M3 3l1.500 1.500M11.500 11.500L13 13M13 3l-1.500 1.500M3 13l1.500-1.500" stroke="#444" stroke-width="1.500"/></symbol>
<symbol id="s-asm" viewBox="0 0 16 22"><rect x="2" y="1" width="6" height="6" fill="#e8c040" stroke="#a8861a"/><rect x="8" y="5" width="5" height="5" fill="#e8c040" stroke="#a8861a"/><path d="M4 8v12M4 14h6M11 10h4" stroke="#2a3ac8" fill="none"/><rect x="10" y="13" width="5" height="5" fill="#e8c040" stroke="#a8861a"/></symbol>
<symbol id="s-con" viewBox="0 0 18 18"><path d="M4 2l5 4 5-4v6l-5-2-5 2z" fill="#2a3ac8"/><path d="M9 1v16" stroke="#888" stroke-dasharray="1 1"/><rect x="1" y="9" width="6" height="7" fill="#f0d858" stroke="#666"/><path d="M10 9l7 7h-7z" fill="#c8181a"/></symbol>
<symbol id="s-part" viewBox="0 0 16 22"><rect x="1" y="1" width="8" height="8" fill="#c8689a" stroke="#666"/><ellipse cx="5" cy="2" rx="4" ry="1.500" fill="#e8a8c8" stroke="#666"/><path d="M3 10v10M3 15h7M11 6h4" stroke="#2a3ac8" fill="none"/><circle cx="12" cy="15" r="3" fill="none" stroke="#c8689a" stroke-width="1.200"/><circle cx="12" cy="15" r="1" fill="#d33"/></symbol>
<symbol id="s-lib" viewBox="0 0 16 16"><rect x="1" y="4" width="4" height="11" fill="#e86a2a"/><rect x="6" y="3" width="4" height="12" fill="#3ab84a"/><rect x="11" y="1" width="4" height="13" fill="#2a6ae0"/></symbol>
<symbol id="s-eye" viewBox="0 0 16 10"><path d="M0 7c3-5 11-6 16 0l-3 2H2z" fill="#778"/><circle cx="9" cy="6" r="2" fill="#5a9a5a"/></symbol>
<symbol id="s-info" viewBox="0 0 18 18"><circle cx="6" cy="12" r="5" fill="#1e78d8"/><path d="M6 10v5M6 8v1" stroke="#fff" stroke-width="1.800"/><path d="M6 5c4 0 7 3 7 6M7 2c6 0 9 4 9 8" fill="none" stroke="#3a9ad8" stroke-width="1.200"/></symbol>
<symbol id="s-doc" viewBox="0 0 14 18"><path d="M1 1h8l4 4v12H1z" fill="#fff" stroke="#2a5ab8"/><circle cx="7" cy="11" r="3" fill="#2a8a8a"/></symbol>
<symbol id="s-clock" viewBox="0 0 16 16"><circle cx="8" cy="8" r="7" fill="#d8d8d8" stroke="#555"/><path d="M8 3v5l3 2" fill="none" stroke="#222" stroke-width="1.400"/></symbol>
<symbol id="s-spec" viewBox="0 0 16 16"><path d="M2 15L8 1l6 14z" fill="#e8c020"/><path d="M2 15l3-7 4 7z" fill="#2a8ad8"/><path d="M9 15l3-7 2 7z" fill="#e0302a"/></symbol>
<symbol id="s-knife" viewBox="0 0 16 16"><path d="M1 2l6 6-3 5-3-3z" fill="#2a4ab0"/><path d="M8 6l7-4-3 6 3 6-7-3z" fill="#8a9ab8"/><path d="M6 9l6 6" stroke="#d33"/></symbol>
<symbol id="s-tool" viewBox="0 0 16 16"><path d="M2 11l7-8 5 4-8 7z" fill="#9a9a9a" stroke="#555"/><circle cx="10" cy="5" r="2" fill="#e8a030"/><path d="M2 15l4-4" stroke="#2a4ab0" stroke-width="1.500"/></symbol>
<symbol id="a-up" viewBox="0 0 12 8"><path d="M1 7l5-5 5 5" fill="none" stroke="#666" stroke-width="2"/></symbol>
<symbol id="a-down" viewBox="0 0 12 8"><path d="M1 1l5 5 5-5" fill="none" stroke="#666" stroke-width="2"/></symbol>
<symbol id="a-left" viewBox="0 0 8 12"><path d="M7 1L2 6l5 5" fill="none" stroke="#666" stroke-width="2"/></symbol>
<symbol id="a-right" viewBox="0 0 8 12"><path d="M1 1l5 5-5 5" fill="none" stroke="#666" stroke-width="2"/></symbol>
<symbol id="c-down" viewBox="0 0 14 10"><path d="M1 1l6 7 6-7" fill="none" stroke="#08647f" stroke-width="2"/></symbol>
<symbol id="c-up" viewBox="0 0 14 10"><path d="M1 9l6-7 6 7" fill="none" stroke="#08647f" stroke-width="2"/></symbol>
</defs>
</svg>

<div class="app">
  <header class="titlebar">
    <div class="qa">
      <span class="nx c w37">NX</span><i class="sep"></i>
      <span class="c w32"><svg class="q"><use href="#q-save"/></svg></span><i class="sep"></i>
      <span class="c w26"><svg class="q"><use href="#q-undo"/></svg></span><span class="c w12"><b class="drop dim"></b></span><span class="c w20"><svg class="q"><use href="#q-redo"/></svg></span>
      <i class="sep ml5"></i>
      <span class="c w24"><svg class="q"><use href="#q-cut"/></svg></span><span class="c w26"><svg class="q"><use href="#q-paste"/></svg></span><span class="c w18"><svg class="q"><use href="#q-find"/></svg></span>
      <i class="sep ml5"></i>
      <span class="c w26"><svg class="q"><use href="#q-win"/></svg></span><span class="c w12"><b class="drop"></b></span><i class="sep ml2"></i>
      <span class="c w26"><svg class="q"><use href="#q-brush"/></svg></span><i class="sep ml2"></i>
      <span class="c w26"><svg class="q"><use href="#q-switch"/></svg></span><span class="qt">切换窗口</span>
      <span class="c w28"><svg class="q"><use href="#q-window"/></svg></span><span class="qt">窗口</span>
      <span class="c w12"><b class="drop"></b></span><span class="c w10 more"><b class="drop"></b></span>
    </div>
    <div class="title">NX 12.0.1.7 - 建模</div>
    <div class="brand">SIEMENS</div>
  </header>

  <nav class="tabs">
    <div class="file">文件(F)</div>
    <div class="tablist">
      <span class="tab">应用模块</span><span class="tab">逆向工程</span><span class="tab active">建模工具</span><span class="tab">模具工具</span><span class="tab">加工工具</span><span class="tab">PMI</span>
    </div>
    <div class="search"><span>查找命令</span><svg class="lens" viewBox="0 0 16 16"><circle cx="10" cy="6" r="4.500" fill="#fff" stroke="#444" stroke-width="1.300"/><path d="M7 9l-5 5 1 1 5-5" fill="#fff" stroke="#444"/></svg></div>
  </nav>

  <section class="ribbon">
    <span class="r"><svg class="i"><use href="#r1"/></svg></span><span class="r"><svg class="i"><use href="#r2"/></svg></span><span class="r"><svg class="i"><use href="#r3"/></svg></span><span class="r"><svg class="i"><use href="#r4"/></svg></span><span class="r"><svg class="i"><use href="#r5"/></svg></span><span class="r"><svg class="i"><use href="#r6"/></svg></span><span class="r"><svg class="i"><use href="#r7"/></svg></span><span class="r"><svg class="i"><use href="#r8"/></svg></span><span class="r"><svg class="i"><use href="#r9"/></svg></span><span class="r"><svg class="i"><use href="#r10"/></svg></span><span class="r"><svg class="i"><use href="#r11"/></svg></span><span class="r"><svg class="i"><use href="#r12"/></svg></span><span class="r"><svg class="i"><use href="#r13"/></svg></span><span class="r"><svg class="i"><use href="#r14"/></svg></span><span class="r"><svg class="i"><use href="#r15"/></svg></span><span class="r"><svg class="i"><use href="#r16"/></svg></span><span class="r"><svg class="i"><use href="#r17"/></svg></span><span class="r"><svg class="i"><use href="#r18"/></svg></span><span class="r"><svg class="i"><use href="#r19"/></svg></span><span class="r"><svg class="i"><use href="#r20"/></svg></span><span class="r"><svg class="i"><use href="#r21"/></svg></span><span class="r"><svg class="i"><use href="#r22"/></svg></span><span class="r"><svg class="i"><use href="#r23"/></svg></span><span class="r"><svg class="i"><use href="#r24"/></svg></span><span class="r"><svg class="i"><use href="#r25"/></svg></span><span class="r"><svg class="i"><use href="#r26"/></svg></span><span class="r"><svg class="i"><use href="#r27"/></svg></span><span class="r"><svg class="i"><use href="#r28"/></svg></span><span class="r"><svg class="i"><use href="#r29"/></svg></span><span class="r"><svg class="i"><use href="#r30"/></svg></span><span class="r"><svg class="i"><use href="#r31"/></svg></span><span class="r"><svg class="i"><use href="#r32"/></svg></span><span class="r"><svg class="i"><use href="#r33"/></svg></span><span class="r"><svg class="i"><use href="#r34"/></svg></span><span class="r"><svg class="i"><use href="#r35"/></svg></span><span class="r"><svg class="i"><use href="#r36"/></svg></span><span class="r"><svg class="i"><use href="#r37"/></svg></span><span class="r"><svg class="i"><use href="#r38"/></svg></span><span class="r"><svg class="i"><use href="#r39"/></svg></span><span class="r"><svg class="i"><use href="#r40"/></svg></span><span class="r"><svg class="i"><use href="#r41"/></svg></span><span class="r"><svg class="i"><use href="#r42"/></svg></span><span class="r"><svg class="i"><use href="#r43"/></svg></span><span class="r"><svg class="i"><use href="#r44"/></svg></span><span class="r"><svg class="i"><use href="#r45"/></svg></span><span class="r"><svg class="i"><use href="#r46"/></svg></span><span class="r"><svg class="i"><use href="#r47"/></svg></span><span class="r"><svg class="i"><use href="#r48"/></svg></span><span class="r"><svg class="i"><use href="#r49"/></svg></span><span class="r"><svg class="i"><use href="#r50"/></svg></span><span class="r"><svg class="i"><use href="#r51"/></svg></span><span class="r"><svg class="i"><use href="#r52"/></svg></span><span class="r"><svg class="i"><use href="#r53"/></svg></span><span class="r"><svg class="i"><use href="#r54"/></svg></span><span class="r"><svg class="i"><use href="#r55"/></svg></span><span class="r"><svg class="i"><use href="#r56"/></svg></span>
  </section>

  <section class="selbar">
    <span class="c w24"><svg class="s"><use href="#b-menu"/></svg></span><span class="menu">菜单(<u>M</u>)</span><span class="c w12"><b class="drop"></b></span>
    <span class="c w24"><svg class="s"><use href="#b1"/></svg></span><span class="c w24"><svg class="s"><use href="#b2"/></svg></span><span class="c w26"><svg class="s"><use href="#b-open"/></svg></span><span class="c w24"><svg class="s"><use href="#b-save"/></svg></span><span class="c w26"><svg class="s"><use href="#b-saveall"/></svg></span><span class="c w22"><svg class="s"><use href="#b-saveas"/></svg></span>
    <i class="sep tall ml6"></i>
    <span class="c w24 ml7"><svg class="s"><use href="#b-swatch"/></svg></span><span class="c w12"><b class="drop"></b></span>
    <span class="combo w132 ml5">无选择过滤器<b class="drop dark"></b></span>
    <span class="c w24 ml5"><svg class="s"><use href="#b-wrench"/></svg></span><span class="c w24 ml3"><svg class="s"><use href="#b-filter"/></svg></span><span class="c w12"><b class="drop"></b></span><span class="c w24"><svg class="s"><use href="#b-tfilter"/></svg></span><span class="c w26"><svg class="s"><use href="#b-pal"/></svg></span>
    <span class="combo w56 ml6">全部<b class="drop dark"></b></span>
    <span class="c w24 ml3"><svg class="s"><use href="#b-snap1"/></svg></span><span class="c w24 ml3"><svg class="s"><use href="#b-snap2"/></svg></span><span class="c w26"><svg class="s"><use href="#b-g1"/></svg></span><span class="c w24"><svg class="s"><use href="#b-g2"/></svg></span><span class="c w26"><svg class="s"><use href="#b-g3"/></svg></span><span class="c w24"><svg class="s"><use href="#b-snap3"/></svg></span><span class="c w24"><svg class="s"><use href="#b-snap4"/></svg></span><span class="c w12"><b class="drop"></b></span>
    <span class="combo w111 ml6">内侧<b class="drop dark"></b></span>
    <span class="tg on first"><svg class="s"><use href="#t1"/></svg></span><span class="tg on"><svg class="s"><use href="#t2"/></svg></span><span class="tg on"><svg class="s"><use href="#t3"/></svg></span><span class="tg on"><svg class="s"><use href="#t4"/></svg></span><span class="tg on"><svg class="s"><use href="#t5"/></svg></span><span class="tg"><svg class="s"><use href="#t6"/></svg></span><span class="tg on"><svg class="s"><use href="#t7"/></svg></span><span class="tg on"><svg class="s"><use href="#t8"/></svg></span><span class="tg"><svg class="s"><use href="#t9"/></svg></span><span class="tg on"><svg class="s"><use href="#t10"/></svg></span><span class="tg on"><svg class="s"><use href="#t11"/></svg></span><span class="tg"><svg class="s"><use href="#t12"/></svg></span><span class="tg on"><svg class="s"><use href="#t13"/></svg></span><span class="tg"><svg class="s"><use href="#t14"/></svg></span><span class="tg on"><svg class="s"><use href="#t15"/></svg></span><span class="tg on"><svg class="s"><use href="#t8"/></svg></span><span class="tg"><svg class="s"><use href="#t16"/></svg></span><span class="tg"><svg class="s"><use href="#t17"/></svg></span><span class="tg"><svg class="s"><use href="#t18"/></svg></span><span class="tg"><svg class="s"><use href="#t19"/></svg></span><span class="tg"><svg class="s"><use href="#t20"/></svg></span><span class="tg"><svg class="s"><use href="#t21"/></svg></span><span class="tg"><svg class="s"><use href="#t22"/></svg></span>
    <i class="sep tall ml8"></i>
    <span class="c w25 ml7"><svg class="s"><use href="#e1"/></svg></span><span class="c w25"><svg class="s"><use href="#e2"/></svg></span><span class="c w25"><svg class="s"><use href="#e3"/></svg></span><span class="c w25"><svg class="s"><use href="#e4"/></svg></span><span class="c w25"><svg class="s"><use href="#e5"/></svg></span><span class="c w25"><svg class="s"><use href="#e6"/></svg></span><span class="c w12"><b class="drop"></b></span><span class="c w25"><svg class="s"><use href="#e7"/></svg></span><span class="c w12"><b class="drop"></b></span><span class="c w25"><svg class="s"><use href="#e8"/></svg></span><span class="c w12"><b class="drop"></b></span><span class="c w25"><svg class="s"><use href="#e9"/></svg></span><span class="c w12"><b class="drop"></b></span>
  </section>

  <main class="work">
    <aside class="res">
      <span class="ri h26"><svg class="ri-ic"><use href="#s-gear"/></svg></span>
      <span class="ri h34 mt17"><svg class="ri-ic"><use href="#s-asm"/></svg></span>
      <span class="ri h32"><svg class="ri-ic"><use href="#s-con"/></svg></span>
      <span class="ri h36 act"><svg class="ri-ic"><use href="#s-part"/></svg></span>
      <span class="ri h30"><svg class="ri-ic"><use href="#s-lib"/></svg></span>
      <span class="ri h36"><svg class="ri-ic"><use href="#s-eye"/></svg></span>
      <span class="ri h60"><svg class="ri-ic"><use href="#s-info"/></svg></span>
      <span class="ri h32"><svg class="ri-ic"><use href="#s-doc"/></svg></span>
      <span class="ri h34 mt12"><svg class="ri-ic"><use href="#s-clock"/></svg></span>
      <span class="ri h34"><svg class="ri-ic"><use href="#s-spec"/></svg></span>
      <span class="ri h34"><svg class="ri-ic"><use href="#s-knife"/></svg></span>
      <span class="ri h34"><svg class="ri-ic"><use href="#s-tool"/></svg></span>
    </aside>

    <aside class="nav">
      <div class="nav-head"><span>部件导航器</span><i class="max"></i></div>
      <div class="treebox">
        <div class="thead"><span>名称</span><b class="sort"></b></div>
        <div class="tmid">
          <div class="rows">
            <div class="row l0"><i class="exp plus"></i><svg class="n"><use href="#n-view"/></svg><span>模型视图</span></div>
            <div class="row l0"><i class="exp plus"></i><svg class="n-chk"><use href="#n-tick"/></svg><svg class="n-cam"><use href="#n-cam"/></svg><span>摄像机</span></div>
            <div class="row l0"><i class="exp minus"></i><svg class="n"><use href="#n-folder"/></svg><span>模型历史记录</span></div>
            <div class="row l1"><svg class="chk"><use href="#n-check"/></svg><svg class="n"><use href="#n-csys"/></svg><span>基准坐标系 (0)</span></div>
            <div class="row l1"><svg class="chk"><use href="#n-check"/></svg><svg class="n"><use href="#n-conv"/></svg><span>收敛体 (1)</span></div>
            <div class="row l1"><svg class="chk"><use href="#n-check"/></svg><svg class="n"><use href="#n-conv"/></svg><span>收敛体 (2)</span></div>
            <div class="row l1 muted"><svg class="chk"><use href="#n-check"/></svg><svg class="n"><use href="#n-conv"/></svg><span>收敛体 (3)</span></div>
            <div class="row l1"><svg class="chk"><use href="#n-check"/></svg><svg class="n"><use href="#n-conv"/></svg><span>收敛体 (4)</span></div>
            <div class="row l1"><svg class="chk"><use href="#n-check"/></svg><svg class="n"><use href="#n-conv"/></svg><span>收敛体 (5)</span></div>
            <div class="row l1"><svg class="chk"><use href="#n-check"/></svg><svg class="n"><use href="#n-conv"/></svg><span>收敛体 (6)</span></div>
            <div class="row l1"><svg class="chk"><use href="#n-check"/></svg><svg class="n"><use href="#n-conv"/></svg><span>收敛体 (7)</span></div>
            <div class="row l1"><svg class="chk"><use href="#n-check"/></svg><svg class="n"><use href="#n-conv"/></svg><span>收敛体 (8)</span></div>
            <div class="row l1"><svg class="chk"><use href="#n-check"/></svg><svg class="n"><use href="#n-conv"/></svg><span>收敛体 (9)</span></div>
            <div class="row l1"><svg class="chk"><use href="#n-check"/></svg><svg class="n"><use href="#n-conv"/></svg><span>收敛体 (10)</span></div>
            <div class="row l1"><svg class="chk"><use href="#n-check"/></svg><svg class="n"><use href="#n-conv"/></svg><span>收敛体 (11)</span></div>
            <div class="row l1"><svg class="chk"><use href="#n-check"/></svg><svg class="n"><use href="#n-conv"/></svg><span>收敛体 (12)</span></div>
            <div class="row l1"><svg class="chk"><use href="#n-check"/></svg><svg class="n"><use href="#n-conv"/></svg><span>收敛体 (13)</span></div>
            <div class="row l1"><svg class="chk"><use href="#n-check"/></svg><svg class="n"><use href="#n-conv"/></svg><span>收敛体 (14)</span></div>
            <div class="row l1"><svg class="chk"><use href="#n-check"/></svg><svg class="n"><use href="#n-conv"/></svg><span>收敛体 (15)</span></div>
            <div class="row l1"><svg class="chk"><use href="#n-check"/></svg><svg class="n"><use href="#n-conv"/></svg><span>收敛体 (16)</span></div>
            <div class="row l1"><svg class="chk"><use href="#n-check"/></svg><svg class="n"><use href="#n-conv"/></svg><span>收敛体 (17)</span></div>
            <div class="row l1"><svg class="chk"><use href="#n-check"/></svg><svg class="n"><use href="#n-conv"/></svg><span>收敛体 (18)</span></div>
            <div class="row l1"><svg class="chk"><use href="#n-check"/></svg><svg class="n"><use href="#n-conv"/></svg><span>收敛体 (19)</span></div>
            <div class="row l1"><svg class="chk"><use href="#n-check"/></svg><svg class="n"><use href="#n-conv"/></svg><span>收敛体 (20)</span></div>
            <div class="row l1"><svg class="chk"><use href="#n-check"/></svg><svg class="n"><use href="#n-conv"/></svg><span>收敛体 (21)</span></div>
            <div class="row l1 cut"><svg class="chk"><use href="#n-check"/></svg><svg class="n"><use href="#n-conv"/></svg></div>
          </div>
          <div class="vbar"><svg class="arr-v"><use href="#a-up"/></svg><i class="vthumb"></i><svg class="arr-v bottom"><use href="#a-down"/></svg></div>
        </div>
        <div class="hbar"><svg class="arr-h"><use href="#a-left"/></svg><i class="hthumb"></i><svg class="arr-h right"><use href="#a-right"/></svg></div>
      </div>
      <div class="sash"></div>
      <div class="sec">相关性<svg class="chev"><use href="#c-down"/></svg></div>
      <div class="sec">细节<svg class="chev"><use href="#c-down"/></svg></div>
      <div class="sec open">预览<svg class="chev"><use href="#c-up"/></svg></div>
      <div class="preview-wrap"><div class="preview"></div></div>
    </aside>

    <section class="view">
      <div class="doctabs"><div class="doctab"><svg class="doc-ic" viewBox="0 0 14 14"><path d="M1 8l6-6 6 4-5 7z" fill="#cfe0f8" stroke="#1a4ab0"/><path d="M2 2l4 3-3 3z" fill="#1a4ab0"/></svg><span>猛禽.prt</span><span class="close">✕</span></div></div>
      <div class="canvas">
        <svg class="scene" viewBox="438 176 1395 669" aria-label="truck model">
          <defs>
            <filter id="scan" filterUnits="userSpaceOnUse" x="640" y="390" width="970" height="380"><feTurbulence type="fractalNoise" baseFrequency=".45" numOctaves="2" seed="4"/><feDisplacementMap in="SourceGraphic" scale="2.500" xChannelSelector="R" yChannelSelector="G"/></filter>
            <linearGradient id="body" gradientUnits="userSpaceOnUse" x1="1100" y1="575" x2="1114" y2="720"><stop offset="0" stop-color="#a6cadc"/><stop offset=".12" stop-color="#98bbcd"/><stop offset=".45" stop-color="#7999ab"/><stop offset=".75" stop-color="#617f90"/><stop offset="1" stop-color="#587586"/></linearGradient>
            <linearGradient id="roof" gradientUnits="userSpaceOnUse" x1="1150" y1="455" x2="1153" y2="485"><stop offset="0" stop-color="#a8cfe2"/><stop offset=".5" stop-color="#98bdd0"/><stop offset="1" stop-color="#8db0c3"/></linearGradient>
            <linearGradient id="rock" gradientUnits="userSpaceOnUse" x1="1215" y1="660" x2="1222" y2="710"><stop offset="0" stop-color="#90b2c4"/><stop offset=".4" stop-color="#6f8fa1"/><stop offset="1" stop-color="#4f6c7d"/></linearGradient>
            <linearGradient id="flareR" gradientUnits="userSpaceOnUse" x1="950" y1="632" x2="940" y2="750"><stop offset="0" stop-color="#a2c6d8"/><stop offset=".4" stop-color="#7da0b2"/><stop offset="1" stop-color="#526f80"/></linearGradient>
            <linearGradient id="flareF" gradientUnits="userSpaceOnUse" x1="1490" y1="565" x2="1420" y2="690"><stop offset="0" stop-color="#add0e2"/><stop offset=".4" stop-color="#84a7b9"/><stop offset="1" stop-color="#567384"/></linearGradient>
            <linearGradient id="hood" gradientUnits="userSpaceOnUse" x1="1430" y1="435" x2="1450" y2="535"><stop offset="0" stop-color="#a9d0e4"/><stop offset="1" stop-color="#94bcd1"/></linearGradient>
            <linearGradient id="pil" gradientUnits="userSpaceOnUse" x1="1215" y1="480" x2="1245" y2="570"><stop offset="0" stop-color="#82a3b5"/><stop offset="1" stop-color="#5f7c8d"/></linearGradient>
            <linearGradient id="gate" gradientUnits="userSpaceOnUse" x1="700" y1="580" x2="680" y2="680"><stop offset="0" stop-color="#7b9cae"/><stop offset="1" stop-color="#6a8a9c"/></linearGradient>
            <linearGradient id="pipe" gradientUnits="userSpaceOnUse" x1="750" y1="728" x2="750" y2="748"><stop offset="0" stop-color="#a8ccdd"/><stop offset="1" stop-color="#4e6b7c"/></linearGradient>
            <linearGradient id="flap" gradientUnits="userSpaceOnUse" x1="1000" y1="450" x2="1030" y2="490"><stop offset="0" stop-color="#6f91a4"/><stop offset="1" stop-color="#a4c9dc"/></linearGradient>
            <radialGradient id="fhi" gradientUnits="userSpaceOnUse" cx="1500" cy="535" r="70"><stop offset="0" stop-color="#c8e2f0" stop-opacity=".75"/><stop offset="1" stop-color="#c8e2f0" stop-opacity="0"/></radialGradient>
            <radialGradient id="bhi" gradientUnits="userSpaceOnUse" cx="940" cy="610" r="90"><stop offset="0" stop-color="#c2deec" stop-opacity=".55"/><stop offset="1" stop-color="#c2deec" stop-opacity="0"/></radialGradient>
            <linearGradient id="wm" x1="0" y1="0" x2="1" y2="1"><stop offset="0" stop-color="#cfe7f4"/><stop offset="1" stop-color="#6ec2ec"/></linearGradient>
          </defs>

          <g filter="url(#scan)">
          <!-- far bed wall -->
          <path d="M947 525l10-4 80 54-20 3-67 8-5-15 5-24z" fill="#7495a7"/>
          <path d="M949 528l70 50M955 522l82 53" stroke="#a9cbdc" fill="none" stroke-width="1.500"/>
          <path d="M950 545l60 34M947 560l40 22" stroke="#55707f" fill="none"/>
          <ellipse cx="962" cy="575" rx="12" ry="9" fill="#5e7a8b"/>

          <!-- rear roof flap -->
          <path d="M977 430L1013 422C1035 435 1055 452 1070 462L1110 458 1065 478 1037 492 1003 465 1003 455Z" fill="#9cc4da"/>
          <path d="M1003 455V465L1037 492 1044 484 1012 458Z" fill="url(#flap)"/>
          <ellipse cx="1050" cy="472" rx="6" ry="2" fill="#d8e6ee"/>

          <!-- windshield header flap -->
          <path d="M1225 407Q1236 405 1247 405C1265 412 1290 435 1300 460L1293 461 1267 448 1247 445V433L1230 418Z" fill="#9cc4da"/>
          <path d="M1230 419l17 14v12l11 3 1-5-5-3 2-5-9-4z" fill="#4f6878"/>
          <ellipse cx="1266" cy="437" rx="4" ry="2" fill="#2b3c48"/><ellipse cx="1270" cy="447" rx="4" ry="1.500" fill="#2b3c48"/>

          <!-- inner arch behind windshield -->
          <path d="M1296 446c20 4 50 14 72 28l24 30-8 4-28-28-25-9-30-3z" fill="#5a7586"/>
          <path d="M1297 460l-4-15 6-5 6 6z" fill="#6a8799"/>

          <!-- hood -->
          <path d="M1287 432C1330 430 1400 432 1433 437 1470 443 1510 460 1533 477 1555 492 1572 510 1580 532L1526 535 1441 533 1421 533 1396 536 1411 508 1397 498 1383 470 1333 450 1303 437Z" fill="url(#hood)"/>
          <path d="M1420 495L1482 487 1533 478C1552 492 1568 508 1578 532L1518 530 1448 533 1408 541 1430 513Z" fill="#9cc3d8"/>
          <path d="M1422 493l50-3 52-4M1450 530l60-4 58-3" stroke="#bcdbea" fill="none" stroke-width="1.400"/>
          <g stroke="#3f5564" fill="none" stroke-width="2.200" stroke-dasharray="6 2 10 3">
            <path d="M1298 441l50 14 30 20 22 26 4 20"/>
            <path d="M1330 448l38 14 26 22"/>
          </g>
          <g fill="none" stroke-linecap="round">
            <path d="M1382 452l40 38M1396 452l40 38M1410 451l40 38M1424 450l36 38M1438 450l30 34M1452 452l28 30" stroke="#3b5262" stroke-width="2"/>
            <path d="M1389 452l40 38M1403 452l40 38M1417 451l40 38M1431 450l36 38M1445 450l30 34" stroke="#d4e8f2" stroke-width="2.400" stroke-dasharray="9 3"/>
          </g>
          <path d="M1392 496l12 22 24 1-3-14-14-14z" fill="#7c9db0"/>
          <path d="M1396 498l10 14M1404 497l10 14M1412 497l8 12" stroke="#3b5262"/>

          <!-- rear cab pillar panel behind door window -->
          <path d="M1214 484l64-10c-24 16-36 46-38 87l-27 4z" fill="url(#pil)"/>
          <path d="M1278 474l19 6c-26 20-42 46-44 78l-13 2c1-40 16-70 38-86z" fill="#4f6979"/>
          <path d="M1283 477l8 2c-24 18-36 44-38 76l-5 1c2-32 14-60 35-79z" fill="#8fb0c2"/>
          <path d="M1212 532l30-6-2 9-28 6z" fill="#3e5666"/>

          <!-- main body shell -->
          <path fill-rule="evenodd" fill="url(#body)" d="M770 608L900 595 1042 582 1038 575V502Q1040 490 1052 484L1075 470 1150 458 1250 447 1268 449 1293 460 1393 533 1440 530 1575 528 1583 563 1590 593 1590 623 1565 645 1555 622 1493 590 1450 607 1420 657 1413 692 1393 685 1390 680 1100 718 1047 722 1012 733 1012 693 983 665 950 660 910 673 880 710 863 752 842 748 790 742 777 740 770 713 757 692 762 640ZM1078 502Q1078 494 1090 492L1217 480 1280 473Q1295 472 1305 484L1355 513 1358 553 1360 563 1307 568 1297 565 1273 558 1213 565 1100 578 1083 573Q1078 560 1078 502Z"/>

          <!-- roof rail and pillars -->
          <path fill="url(#roof)" d="M1052 484L1075 470 1150 458 1250 447 1268 449 1293 460 1308 471 1304 484 1292 474 1280 472 1217 480 1090 492 1078 502 1064 502 1040 510 1038 502Q1040 490 1052 484Z"/>
          <path d="M1062 496l60-10 100-11 60-6" fill="none" stroke="#d3e7f1" stroke-width="1.500"/>
          <path d="M1070 484l150-16 50-5" fill="none" stroke="#c2dcea" stroke-width="1"/>
          <path d="M1066 502c-4 6-4 60 0 90" fill="none" stroke="#7d9fb1" stroke-width="8"/>
          <path d="M1048 500l-2 84" fill="none" stroke="#8cafc1" stroke-width="10"/>
          <path d="M1297 472l60 40 30 20" fill="none" stroke="#a7cbdd" stroke-width="6"/>
          <path d="M1302 482l52 31" fill="none" stroke="#54707f" stroke-width="1.500"/>

          <!-- belt line -->
          <path d="M1083 578l130-13 60-7 24 7 10 3 53-5 3 7-56 6-12-1-24-8-60 7-130 14z" fill="#b5d6e6"/>

          <!-- bed rail -->
          <path d="M770 608L900 595 1042 578 1040 592 900 610 785 622Z" fill="#a9cfe2"/>
          <path d="M778 612l130-13 130-15M790 620l120-12 125-16" stroke="#eaf5fa" fill="none" stroke-width="1.300" stroke-dasharray="14 3 6 2"/>
          <path d="M790 628l120-15 126-14" stroke="#c9e3ee" fill="none" stroke-width="2"/>
          <rect x="770" y="590" width="290" height="80" fill="url(#bhi)"/>

          <!-- rocker -->
          <path d="M1047 683l346-41-3 38-290 38-53 4z" fill="url(#rock)"/>
          <path d="M1047 683l346-41" stroke="#3f5666" stroke-width="1.200" fill="none"/>

          <!-- front fender highlight -->
          <path d="M1393 533l47-3 135-2 8 35-16 24c-25-20-60-28-90-20-20 8-35 24-44 42l-9-2 7-40z" fill="url(#fhi)"/>
          <path d="M1405 530c20-14 40-8 90-6" stroke="#cfe6f2" fill="none" stroke-width="2"/>
          <path d="M1393 533v60l-4 48" stroke="#eef6fa" fill="none" stroke-dasharray="4 6" stroke-opacity=".8"/>

          <!-- mirror -->
          <path d="M1357 513l10 17 8-2 13 6 3 26-15 3-9-7-9 0z" fill="#7b9cae"/>
          <path d="M1367 532l16-2 7 8v18l-13 4-9-8z" fill="#90b2c4"/>
          <path d="M1363 564l14-3 2 7-15 4z" fill="#5e7c8d" stroke="#a8c9da" stroke-width=".8"/>

          <!-- flares -->
          <path fill="url(#flareR)" d="M842 748C848 700 880 650 950 633 1000 633 1030 670 1035 723L1012 733 1012 693C1005 670 985 658 950 660 910 662 880 700 863 752Z"/>
          <path d="M846 720c8-30 40-80 104-84 45-2 78 40 84 80" fill="none" stroke="#c0dcea" stroke-width="1.300"/>
          <path fill="url(#flareF)" d="M1390 682C1395 640 1415 590 1470 570 1510 560 1550 575 1570 600L1555 620C1530 595 1490 585 1455 605 1430 625 1418 665 1413 692Z"/>
          <path d="M1396 650c10-40 35-72 75-80 34-6 68 6 92 28" fill="none" stroke="#c8e2ef" stroke-width="1.300"/>
          <path d="M1455 605c-25 20-37 60-42 87M1555 622c-25-27-65-37-100-17" fill="none" stroke="#48606f" stroke-width="1.200"/>
          <path d="M863 752c5-28 23-72 87-92 35 0 55 18 62 33" fill="none" stroke="#48606f" stroke-width="1.200"/>

          <!-- side vent -->
          <path d="M1410 580l23-25 22-2-18 27z" fill="#bedae8"/>
          <path d="M1416 578l18-22M1422 578l17-23M1428 578l16-23M1434 578l13-20" stroke="#45606f" stroke-width="1.400"/>

          <!-- grille, bumper end -->
          <path d="M1552 552l24-8 7 18-2 22-12 8-15-22z" fill="#7a9cb0"/>
          <path d="M1554 556l22-8M1556 562l24-8M1558 568l24-8M1561 574l20-7" stroke="#e2eff6" stroke-width="1.600" stroke-dasharray="3 1.500"/>
          <path d="M1554 560l10 12M1562 556l10 14" stroke="#2f4250" stroke-width="1.500"/>
          <path d="M1558 620l32-18v24l-25 20-6-14z" fill="#8bafc2" stroke="#3e5666" stroke-width=".8"/>
          <path d="M1570 620l12-8 5 10-12 10z" fill="#4d6878"/>
          <path d="M1568 626l16-10M1572 630l14-9" stroke="#cfe4ef" stroke-width="1.400"/>
          <path d="M1553 620l14-10 20-20 3 5-22 22-12 10z" fill="#a9cde0"/>

          <!-- door details -->
          <path d="M1102 677l291-37" stroke="#2f4350" stroke-width="1" fill="none"/>
          <g>
            <rect x="1078" y="608" width="33" height="16" rx="4" fill="#7c9db0" stroke="#cbe2ee" transform="rotate(-5 1094 616)"/>
            <rect x="1081" y="612" width="27" height="5" rx="2" fill="#b5d4e3" stroke="#38505f" transform="rotate(-5 1094 616)"/>
            <rect x="1226" y="590" width="34" height="18" rx="4" fill="#7c9db0" stroke="#cbe2ee" transform="rotate(-5 1243 599)"/>
            <rect x="1229" y="595" width="28" height="5" rx="2" fill="#b5d4e3" stroke="#38505f" transform="rotate(-5 1243 599)"/>
          </g>
          <path d="M1064 492l1 105-2 126" fill="none" stroke="#eff6f8" stroke-width="1" stroke-dasharray="30 2 40 3" stroke-opacity=".85"/>
          <path d="M1212 567l4 30-2 60-7 46" fill="none" stroke="#eff6f8" stroke-width="1" stroke-opacity=".85"/>
          <path d="M1190 558v16" stroke="#7395a7" stroke-width="1.500"/>

          <!-- tail end -->
          <path d="M765 640l45-2 2 10-4 4-11 15-5 25-32-2z" fill="#d3dde2"/>
          <path d="M775 642l30-2-3 8-20 4zM785 652l18-2-6 17-5 25-10-4 3-20z" fill="#6f8fa0"/>
          <path d="M762 670l8-25 4 2-4 30 14 4-4 8-20-2z" fill="#a9cbdc"/>
          <path d="M810 638l-1 10 4 8-12 18-8 22" stroke="#9abcce" stroke-width="2.500" fill="none"/>
          <ellipse cx="770" cy="705" rx="5" ry="3" fill="#9cbccc" stroke="#445c6b"/>

          <!-- tailgate -->
          <path d="M668 560l14-5 22 3 66 49-8 85-8-2-77-55-11-12-1-25z" fill="url(#gate)"/>
          <path d="M682 556l20-1 68 52-7 16-44-36z" fill="#a4c7d9"/>
          <path d="M684 558l34 30 44 34" fill="none" stroke="#53707f" stroke-width="2"/>
          <path d="M673 566l27 17 -3 10-24-16z" fill="#51707f"/>
          <path d="M690 566l60 44M700 562l60 44M708 560l56 42" stroke="#c6dfec" stroke-width="1" stroke-dasharray="1.500 2"/>
          <path d="M667 623l78 52 10 15-6 0-82-52z" fill="#7fa0b2"/>
          <g fill="none" stroke="#445c6b">
            <path d="M672 590l30 20 0 12-29-16zM706 612l36 24 0 12-36-24zM692 600l40 25M695 606l36 24"/>
            <path d="M728 650l22 16M732 655l18 13" stroke="#d4e6f0" stroke-dasharray="2 1.500"/>
          </g>
          <path d="M666 625l88 66 1 4-6 0-83-62z" fill="#5f7e90"/>
          <path d="M668 635l84 58 14 12 0 10-3 2-90-61z" fill="#7294a6" opacity=".7"/>

          <!-- lower bumper -->
          <path d="M780 713l80-6-8 41-62-6z" fill="#5b7888"/>
          <path d="M780 713l70-6M790 741l52 6" stroke="#bcd8e6" stroke-width="1.300" fill="none"/>

          <!-- exhaust -->
          <path d="M737 730l30-2 10 12-34 8z" fill="url(#pipe)"/>
          <ellipse cx="740" cy="739" rx="4.500" ry="9" fill="#b5d1df" stroke="#4a6170"/>
          <ellipse cx="740" cy="739" rx="2.500" ry="6" fill="#4f6878"/>

          <!-- scan specks -->
          <g fill="#8cadbe">
            <rect x="712" y="722" width="10" height="3"/><rect x="714" y="727" width="12" height="3"/><rect x="724" y="725" width="3" height="3"/>
            <rect x="690" y="707" width="1" height="2"/><rect x="677" y="708" width="4" height="2"/><rect x="689" y="678" width="1" height="2"/><rect x="726" y="713" width="3" height="1"/>
            <rect x="756" y="708" width="6" height="2"/><rect x="764" y="722" width="4" height="6"/>
          </g>

          <!-- running board -->
          <path d="M1067 732L1100 725 1167 715 1300 702 1390 690Q1397 692 1396 698L1393 702 1233 718 1120 735 1080 735Z" fill="#9cc2d6"/>
          <g fill="none" stroke="#d8edf6" stroke-width="2.500" stroke-dasharray="4 4">
            <path d="M1110 727l60-8 130-13 88-12"/>
            <path d="M1100 732l70-8 130-13 86-12"/>
          </g>
          </g>

          <!-- csys -->
          <g fill="none" stroke="#a65a58" stroke-width="1">
            <path d="M1232 568h29l20 31-21 28h-30l-21-29z"/>
            <path d="M1252 600l-40-60M1252 600h46M1252 600l-40 50M1232 568l22 32M1230 627l22-27"/>
            <path d="M1245 600h14M1252 594v12" stroke-width="2"/>
          </g>
          <path d="M1211 537l10 10-5 4z" fill="#a14e4c"/><path d="M1296 596l12 4-12 4z" fill="#a14e4c"/><path d="M1218 642l-8 12 4 3 7-12z" fill="#b45d5a"/>
          <g class="axis" fill="#b36b68"><text x="1204" y="539">X</text><text x="1310" y="604">Z</text><text x="1200" y="662">Y</text></g>

          <!-- watermark -->
          <g>
            <path d="M1586 750l36 20v42l-36 20-35-20v-42z" fill="url(#wm)"/>
            <path d="M1586 750l24 10 2 26-26-20-18 8-17-4zM1622 770l-10 16-26 10 36 0zM1551 812l20-22v22l15 20z" fill="#fff" opacity=".18"/>
            <path d="M1586 763l24 14v26l-24 14-24-14v-26z" fill="#e3e5e8"/>
            <path d="M1586 772l17 9-17 9-17-9z" fill="#d5ecf8"/><path d="M1569 781l17 9v19l-17-9z" fill="#a7d7f1"/><path d="M1603 781l-17 9v19l17-9z" fill="#7cc0e8"/>
            <text class="wm1" x="1629" y="795">3D世界网</text>
            <text class="wm2" x="1632" y="818">WWW.3DSJW.COM</text>
          </g>
        </svg>
      </div>
    </section>
  </main>
</div>
</body>
</html>
```

FILE: styles.css
```css
* { box-sizing: border-box; }
html, body { margin: 0; padding: 0; }
body {
  width: 1833px;
  height: 845px;
  overflow: hidden;
  background: #fff;
  color: #222;
  font: 12px/1.2 "Noto Sans CJK SC", "Noto Sans", sans-serif;
}
.defs { position: absolute; }
.app { display: flex; flex-direction: column; height: 845px; }

/* helpers */
.c { display: flex; align-items: center; justify-content: center; flex: none; height: 100%; }
.w10 { width: 10px; } .w12 { width: 12px; } .w18 { width: 18px; } .w20 { width: 20px; }
.w22 { width: 22px; } .w24 { width: 24px; } .w25 { width: 25px; } .w26 { width: 26px; }
.w28 { width: 28px; } .w32 { width: 32px; } .w37 { width: 37px; }
.ml2 { margin-left: 2px; } .ml3 { margin-left: 3px; } .ml5 { margin-left: 5px; }
.ml6 { margin-left: 6px; } .ml7 { margin-left: 7px; } .ml8 { margin-left: 8px; }
.mt12 { margin-top: 12px; } .mt17 { margin-top: 17px; }
.sep { flex: none; width: 1px; height: 22px; background: #d4d4d4; }
.sep.tall { height: 24px; }
.drop { display: block; width: 0; height: 0; border: 3px solid transparent; border-top: 4px solid #222; border-bottom: 0; }
.drop.dim { border-top-color: #bbb; }
.drop.dark { border-width: 5px 5px 0; border-top-color: #111; }
.more { position: relative; }
.more::before { content: ""; position: absolute; left: 2px; top: 9px; width: 6px; height: 1px; background: #222; }
.q { width: 17px; height: 17px; }
.i { width: 24px; height: 24px; display: block; }
.s { width: 18px; height: 18px; display: block; }

/* title bar */
.titlebar { display: flex; align-items: center; height: 26px; flex: none; background: #fff; }
.qa { display: flex; align-items: center; height: 26px; width: 1044px; flex: none; }
.nx { font: 700 23px/26px "Liberation Sans", sans-serif; color: #7f97a8; justify-content: flex-start; }
.qt { font-size: 11px; color: #111; flex: none; }
.title { font-size: 13px; color: #222; flex: none; }
.brand { margin-left: auto; margin-right: 10px; font: 700 12px/26px "Liberation Sans", sans-serif; letter-spacing: .6px; color: #009999; }

/* tabs */
.tabs { display: flex; align-items: stretch; height: 28px; flex: none; background: #dcdcdc; }
.file { width: 77px; flex: none; background: #55a0b8; color: #fff; font-size: 12.500px; line-height: 28px; padding-left: 15px; }
.tablist { display: flex; margin-left: 589px; flex: none; }
.tab { padding: 0 13px; font-size: 13px; line-height: 28px; color: #333; }
.tab.active { background: #fff; color: #007a99; border-top: 1px solid #aaa; line-height: 27px; }
.search { margin: 5px 5px 0 auto; width: 124px; height: 18px; background: #fff; border: 1px solid #aaa; display: flex; align-items: center; justify-content: space-between; padding: 0 1px 0 2px; font-size: 10.500px; color: #aaa; }
.lens { width: 16px; height: 16px; }

/* ribbon */
.ribbon { display: flex; height: 68px; flex: none; padding: 14px 0 0 8px; overflow: hidden; border-bottom: 1px solid #ddd; background: #fff; }
.r { flex: none; width: 33px; display: flex; justify-content: center; height: 24px; }

/* selection bar */
.selbar { display: flex; align-items: center; height: 32px; flex: none; padding-left: 66px; border-bottom: 2px solid #a6a6a6; background: #fff; }
.menu { flex: none; width: 41px; font-size: 12px; color: #111; white-space: nowrap; }
.combo { flex: none; height: 20px; border: 1px solid #aaa; display: flex; align-items: center; justify-content: space-between; padding: 0 6px 0 2px; font-size: 11px; color: #111; background: #fff; }
.w132 { width: 132px; } .w56 { width: 56px; } .w111 { width: 111px; }
.tg { flex: none; width: 23px; height: 21px; margin-left: 2px; display: flex; align-items: center; justify-content: center; border: 1px solid transparent; }
.tg.first { margin-left: 5px; }
.tg.on { background: #cfe6ec; border-color: #b3d6de; }

/* workspace */
.work { display: flex; flex: 1; min-height: 0; }
.res { width: 22px; flex: none; background: #dcdcdc; display: flex; flex-direction: column; }
.ri { display: flex; align-items: center; justify-content: center; flex: none; }
.ri.act { background: #fff; border-top: 1px solid #bbb; border-bottom: 1px solid #bbb; }
.ri-ic { width: 17px; height: 20px; }
.h26 { height: 26px; } .h30 { height: 30px; } .h32 { height: 32px; } .h34 { height: 34px; }
.h36 { height: 36px; } .h60 { height: 60px; }

/* navigator */
.nav { width: 416px; flex: none; background: #fff; border-right: 1px solid #8f8f8f; display: flex; flex-direction: column; padding-left: 5px; overflow: hidden; }
.nav-head { height: 29px; flex: none; display: flex; align-items: center; justify-content: space-between; padding: 0 17px 0 3px; font-size: 12px; color: #222; }
.max { width: 12px; height: 11px; border: 1px solid #111; border-top-width: 2px; }
.treebox { width: 400px; height: 542px; flex: none; border: 1px solid #ddd; background: #f0f0f0; padding: 0 1px 1px 0; display: flex; flex-direction: column; }
.thead { height: 21px; flex: none; background: #f0f0f0; border-bottom: 1px solid #d8d8d8; display: flex; align-items: center; padding-left: 6px; font-size: 12px; color: #222; }
.sort { margin-left: 22px; width: 0; height: 0; border: 4.500px solid transparent; border-top: 0; border-bottom: 5px solid #222; }
.tmid { display: flex; height: 504px; flex: none; }
.rows { width: 382px; flex: none; overflow: hidden; background: #fff; }
.row { position: relative; display: flex; align-items: center; height: 20px; border-bottom: 1px solid #ececec; background: #fff; color: #333; font-size: 12px; white-space: nowrap; }
.row:nth-child(even) { background: #f8f8f8; }
.row.muted { color: #b0b0b0; }
.row.l0 { padding-left: 5px; }
.row.l1 { padding-left: 40px; }
.row.l0::before { content: ""; position: absolute; left: 9px; top: 14px; height: 12px; border-left: 1px dotted #888; }
.row.l0:nth-child(3)::before { display: none; }
.row.l0::after { content: ""; position: absolute; left: 14px; top: 10px; width: 4px; border-top: 1px dotted #888; }
.row.l1::before { content: ""; position: absolute; left: 29px; top: 0; height: 20px; border-left: 1px dotted #888; }
.row.l1::after { content: ""; position: absolute; left: 30px; top: 10px; width: 9px; border-top: 1px dotted #888; }
.exp { position: relative; z-index: 1; flex: none; width: 9px; height: 9px; border: 1px solid #aaa; background: #fff; margin-right: 5px; }
.exp::before { content: ""; position: absolute; left: 1px; top: 3px; width: 5px; height: 1px; background: #111; }
.exp.plus::after { content: ""; position: absolute; left: 3px; top: 1px; width: 1px; height: 5px; background: #111; }
.n { width: 16px; height: 17px; flex: none; margin-right: 3px; }
.n-chk { width: 14px; height: 12px; flex: none; margin: 0 2px 0 1px; }
.n-cam { width: 16px; height: 16px; flex: none; margin-right: 2px; }
.chk { width: 12px; height: 12px; flex: none; margin-right: 2px; }
.vbar { position: relative; width: 15px; flex: none; background: #f0f0f0; }
.vthumb { position: absolute; left: 0; top: 18px; width: 15px; height: 92px; background: #c9c9c9; }
.arr-v { position: absolute; left: 3px; top: 6px; width: 9px; height: 6px; }
.arr-v.bottom { top: auto; bottom: 4px; }
.hbar { position: relative; height: 15px; flex: none; background: #f0f0f0; }
.hthumb { position: absolute; left: 17px; top: 0; width: 171px; height: 15px; background: #c9c9c9; }
.arr-h { position: absolute; left: 6px; top: 3px; width: 6px; height: 9px; }
.arr-h.right { left: 371px; }
.sash { width: 402px; height: 5px; flex: none; margin-top: 2px; margin-left: -1px; background: #c6c6c6; border: 1px solid #9a9a9a; }
.sec { position: relative; height: 24px; width: 402px; margin-left: -1px; flex: none; padding-left: 7px; font-size: 14px; line-height: 24px; color: #0b7ea3; border-bottom: 2px solid #d5d5d5; }
.sec.open { border-bottom: 0; border-left: 1px solid #ddd; border-right: 1px solid #ddd; padding-left: 6px; }
.chev { position: absolute; right: 5px; top: 6px; width: 13px; height: 9px; }
.preview-wrap { flex: 1; width: 402px; margin-left: -1px; border-left: 1px solid #ddd; border-right: 1px solid #ddd; padding: 4px 0 0 77px; }
.preview { width: 247px; height: 60px; border: 1px solid #ddd; }

/* graphics view */
.view { flex: 1; min-width: 0; display: flex; flex-direction: column; }
.doctabs { height: 22px; flex: none; background: #fff; }
.doctab { width: 92px; height: 22px; background: #55a0b8; color: #fff; display: flex; align-items: center; padding-left: 4px; font-size: 12px; }
.doc-ic { width: 14px; height: 14px; margin-right: 8px; flex: none; }
.close { margin-left: 9px; font-size: 11px; font-weight: 700; }
.canvas { flex: 1; min-height: 0; background: linear-gradient(#b4b5b7, #e6e7e9); }
.scene { display: block; width: 100%; height: 100%; }
.axis { font: 13px "Liberation Sans", sans-serif; }
.wm1 { font: 700 41px "Noto Sans CJK SC", sans-serif; fill: #f1f2f4; }
.wm2 { font: 700 12.500px "DejaVu Sans", sans-serif; letter-spacing: 1.600px; fill: #f1f2f4; }
```
